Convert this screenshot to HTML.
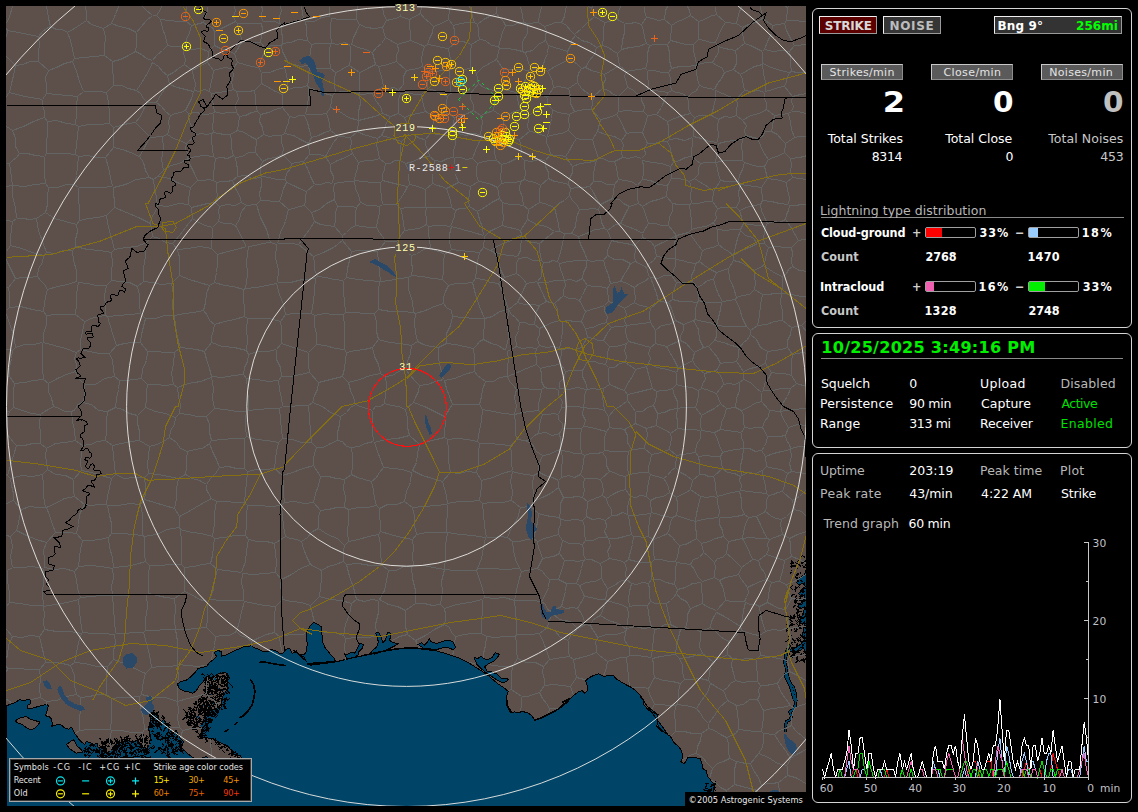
<!DOCTYPE html>
<html><head><meta charset="utf-8"><title>Lightning Tracker</title>
<style>
html,body{margin:0;padding:0;background:#000;}
body{width:1138px;height:812px;position:relative;overflow:hidden;font-family:"DejaVu Sans","Liberation Sans",sans-serif;color:#fff;}
.t{position:absolute;white-space:pre;}
.fr{font-weight:400}.fb{font-weight:700}
.fcb{font-family:"DejaVu Sans Condensed","DejaVu Sans","Liberation Sans",sans-serif;font-weight:700;font-stretch:condensed}
.fc{font-family:"DejaVu Sans Condensed","DejaVu Sans","Liberation Sans",sans-serif;font-weight:400;font-stretch:condensed}
.m{font-family:"Liberation Mono","DejaVu Sans Mono",monospace;background:#5d4f49;line-height:1;padding:0 1px}
.panel{position:absolute;left:812px;width:318px;border:1px solid #d4d4d4;border-radius:6px;}
.btn{position:absolute;border:1px solid;border-color:#f0f0f0 #9a9a9a #9a9a9a #f0f0f0;}
.lbl{position:absolute;background:#5a5a5a;border:1px solid;border-color:#c8c8c8 #8c8c8c #8c8c8c #c8c8c8;}
.rule{position:absolute;height:1px;background:#8a8a8a;}
.bar{position:absolute;width:49px;height:9px;border:1px solid #a0a0a0;border-radius:2px;background:#000;}
.bar i{display:block;height:9px;}
#legend{position:absolute;left:9px;top:758px;width:241px;height:42px;border:1px solid #a8a8a8;background:#000;box-shadow:inset 0 0 0 1px #3c3c3c;}
#copy{position:absolute;left:685px;top:792px;width:122px;height:15px;background:#000;}
</style></head><body>
<svg id="map" width="800" height="800" viewBox="6 6 800 800" shape-rendering="crispEdges" style="position:absolute;left:6px;top:6px;background:#5d4f49">
<g transform="translate(.5 .5)">
<g fill="#004467" stroke="#000" stroke-width="1" stroke-linejoin="round">
<path d="M6 806.5 L6 705.5 L5.9 705.5 L10.5 703.4 L14.8 702 L19 699.1 L23.2 700.5 L27.4 698.7 L30.2 699.8 L29.8 703.4 L26.7 704.8 L27.4 708.3 L32.3 707.6 L39.4 705.5 L45 704.1 L48.5 704.8 L47.1 707.6 L46.4 711.1 L45 715.3 L48.5 716 L50.6 718.1 L52 723 L51.3 725.9 L55.5 724.4 L59.8 723.7 L64 727.3 L68.2 728.7 L71 726.6 L73.1 730.8 L75.9 735 L78 738.5 L80.8 741.3 L84.4 744.1 L85.8 741.3 L90 742 L92.8 744.1 L97 742.7 L97 746.2 L101.2 747.6 L104.7 749.8 L106.2 753.3 L110 750 L114 746 L117 741 L122 743 L126 739 L131 742 L136 740 L140 745 L146 748 L149 744 L150 736 L148 728 L150 720 L149 713 L153 711 L157 716 L160 722 L163 719 L168 726 L172 732 L176 730 L179 737 L183 741 L181 747 L186 752 L192 757 L198 760 L200.3 757.8 L205.6 756 L212.6 761.3 L221.4 763 L235.4 761.3 L241.1 758.1 L239.8 755.1 L233.7 754.2 L231.1 750.7 L227.5 745.4 L223.1 743.7 L217.9 741.1 L212.6 738.4 L207.3 737.5 L202.1 736.7 L201.2 731.4 L202.1 724.4 L202.9 719.1 L205.6 715.6 L209.1 710.3 L214.4 708.5 L220.5 706.8 L221.4 698 L224 692.7 L227.5 687.5 L226.7 682.2 L227.5 675.1 L224.9 671.6 L217.9 673.4 L210.8 677.8 L205.6 676 L204.7 677.8 L202.1 682.2 L198.5 685.7 L195.9 690.1 L192.4 692.7 L188 691.3 L182.7 690.4 L178.3 687.5 L177.1 683.6 L180.1 680.8 L185.4 680.1 L190.6 676 L194.7 672 L197.7 667.8 L202.1 667.2 L206.4 665.5 L209.1 662 L212.6 659.3 L216.1 655.8 L213.5 652.3 L217 649.7 L221.4 651.4 L220.5 655.8 L224.9 654.9 L230.2 652.3 L235.4 649.7 L239.8 647.9 L242.5 646.2 L251.3 645.3 L253 647 L258.3 648.8 L261.8 650.5 L267.1 651.4 L270.6 648.8 L275.9 650.5 L279.4 653.2 L282.9 652.3 L285.5 648.8 L289.1 647.9 L291.7 653.2 L296.1 650.5 L298.7 654.9 L303.1 655.8 L305.7 660.7 L293.5 650.1 L297 652.7 L300.5 654.5 L304.1 653.6 L305.8 651 L306.7 643.9 L305.8 632.5 L307.6 629 L310.2 624.6 L312.8 622 L317.2 623.7 L320.8 626.4 L321.6 635.1 L322.5 642.2 L325.1 648.3 L327.8 651 L330.4 654.5 L333.9 658 L335.3 660.8 L325.1 662.6 L314.6 664 L309.7 664.7 L321.6 663.3 L335.7 661.3 L348 658.3 L360.3 655.7 L372.6 653.1 L384.9 650.4 L395.4 648.7 L406 647.8 L413 647.5 L423.6 648.7 L435.9 650.4 L448.2 654 L458.7 657.5 L467.5 661.9 L474.5 666.3 L481.6 670.7 L486 674.2 L487.6 675 L492.8 679.4 L498.1 683.8 L503.4 687.3 L507.8 690.8 L506 696.1 L507.3 704.9 L511.3 712.3 L513.9 711.4 L517.5 711.9 L522.7 711.1 L528 712.8 L531.5 715.4 L534.1 719.8 L540.3 717.2 L545.6 714.6 L550.8 711.9 L556.1 709.3 L561.4 704.9 L566.7 700.5 L571.9 696.1 L577.2 691.7 L581.6 690 L584.2 692.6 L586.9 690 L586.9 685.6 L585.1 680.3 L587.8 677.7 L593 675 L598.3 673.3 L603.6 675.9 L608.8 674.7 L613.2 675.4 L615.9 678.5 L620.3 681.2 L624.7 683.8 L629.9 686.4 L635.2 690 L639.6 694.4 L643.1 699.6 L645.7 704.9 L651 709.3 L656.3 712.8 L657.2 719 L656.3 726 L660.7 730.4 L666.8 733 L640 696.4 L642.6 699 L643.5 704.3 L647.9 709.5 L653.2 712.2 L657.6 713.9 L656.7 722.7 L659.3 728 L664.6 732.4 L669.9 735.9 L673.4 742.1 L677.8 745.6 L681.3 750.8 L682.2 756.1 L680.4 761.4 L683.9 763.1 L687.5 757 L692.7 757 L699.8 757.9 L701.5 763.1 L701.5 767.5 L705.9 770.2 L706.8 775.4 L710.3 779.8 L713.8 784.2 L712.9 791.3 L713.8 796.5 L715.6 805.7 L715 806.5Z"/>
<path d="M343.6 652.7 L346.2 654.5 L350.6 651.8 L354.1 652.7 L356.8 648.3 L359.4 643.1 L362.9 643.9 L362.1 647.5 L358.5 651 L357.7 654.5 L353.3 657.1 L346.2 658Z"/>
<path d="M370 652.7 L372.6 649.2 L376.1 646.6 L377.9 641.3 L375.2 632.5 L377.9 631.6 L380.5 636 L382.3 642.2 L384.9 639.5 L386.7 632.5 L389.3 631.6 L390.2 636.9 L388.4 639.5 L392.8 642.2 L398.1 643.1 L393.7 645.7 L388.4 648.3 L381.4 651 L374.4 653.6Z"/>
<path d="M417.4 643.9 L420.9 642.2 L423.6 644.8 L427.1 641.3 L428.8 637.8 L430.6 641.3 L435.9 643.1 L441.1 641.3 L447.3 639.5 L452.6 641.3 L455.2 646.6 L452.6 649.2 L446.4 646.6 L441.1 647.5 L435.9 649.2 L428.8 648.3 L422.7 647.5Z"/>
<path d="M473.5 656.6 L477 658.3 L480.5 655.7 L483.2 658.3 L487.6 659.2 L492 656.6 L494.6 652.2 L499 653.9 L496.4 657.5 L492.8 661 L487.6 663.6 L484.1 666.2 L486.7 670.6 L491.1 671.5 L496.4 673.3 L500.8 677.7 L507.8 678.5 L506 681.2 L501.6 682.1 L496.4 679.4 L491.1 675.9 L485.8 672.4 L480.5 668 L476.2 663.6Z"/>
<path d="M115.3 749.1 L119.5 744.8 L123.7 746.2 L127.2 741.3 L130.1 744.1 L132.9 741.3 L135 745.5 L139.2 746.2 L142 749.1 L146.2 750.5 L147.6 753.3 L140.6 755.4 L135 756.1 L126.5 757.5 L119.5 756.8 L116.7 753.3Z"/>
<path d="M807.2 559.7 L804.9 563.6 L806.5 569.6 L803.3 574.5 L799 577.4 L796 582.4 L799 584.3 L802.5 582.4 L804.9 586.3 L801.3 590.2 L798 593.2 L800.9 596.2 L804.5 594.2 L803.3 600.1 L799.4 603.1 L797 606 L800.9 608 L804.1 606 L802.9 612.9 L800 617.8 L798.6 622.8 L802.1 623.7 L804.1 620.8 L803.3 628.7 L802.1 634.6 L804.1 638.5 L800.9 643.4 L796 646.4 L791.1 647.4 L789.1 650.3 L794 652.3 L799 650.3 L803.3 647.4 L804.9 653.3 L807.2 660.2 L808 660 L808 560Z"/>
</g>
<path d="M789.1 644.4 L786.2 650.3 L785.2 656.3 L784.2 662.2 L786.2 668.1 L785.2 676 L788.1 681.9 L791.1 687.8 L793.1 693.7 L794 700 L785.9 670.9 L786.7 677 L789.4 682.3 L792.9 686.7 L794.7 692.8 L795.5 699.9 L794.7 705.1 L792 709.5 L789.4 711.3 L791.1 715.7 L789.4 719.2 L785.9 721 L785 726.2 L785 731.5" fill="none" stroke="#000" stroke-width="3.2"/><path d="M789.1 644.4 L786.2 650.3 L785.2 656.3 L784.2 662.2 L786.2 668.1 L785.2 676 L788.1 681.9 L791.1 687.8 L793.1 693.7 L794 700 L785.9 670.9 L786.7 677 L789.4 682.3 L792.9 686.7 L794.7 692.8 L795.5 699.9 L794.7 705.1 L792 709.5 L789.4 711.3 L791.1 715.7 L789.4 719.2 L785.9 721 L785 726.2 L785 731.5" fill="none" stroke="#004467" stroke-width="1.6"/>
<g fill="#5d4f49" stroke="#000" stroke-width="1">
<path d="M14.8 720.2 L19.7 717.4 L25.3 716 L30.2 718.8 L35.1 720.2 L39.4 721.6 L37.3 725.1 L33.7 728 L30.2 729.4 L26 727.3 L21.1 723.7 L16.9 722.3Z"/>
<path d="M66.1 744.1 L70.3 740.6 L73.1 739.2 L76.6 745.5 L80.8 749.1 L82.2 751.9 L75.9 752.6 L70.3 749.1 L67.5 746.2Z"/>
</g>
<g fill="none" stroke="#000" stroke-width="1.6">
<path d="M306.7 663.6 L314.6 663.3 L325.1 661.9 L335.3 660.6"/>
<path d="M360.3 655.5 L372.6 652.9 L384.9 650.3 L395.4 648.5 L406 647.6 L413 647.3 L423.6 648.5 L435.9 650.3"/>
<path d="M312.8 662.8 L321.6 662.5 L330 661.8"/>
<path d="M258.3 662 L263.6 661.4 L270.6 662.8 L279.4 664.3 L285.5 665"/>
<path d="M249.5 678.7 L253 683.9 L254.4 691 L253.4 698 L251.3 705 L247.8 710.3 L242.5 715.6 L239 717.3"/>
<path d="M233.7 724.4 L237.2 721.7"/>
<path d="M224 731.4 L228.4 728.8"/>
<path d="M534.1 719.8 L540.3 717.6 L547.3 714 L554.4 710.5 L561.4 705.8 L568.4 700"/>
<path d="M506 696.1 L506.6 704.9 L510.4 711.9"/>
<path d="M561.4 702.3 L565.8 699.6 L569.3 697.9"/>
</g>
<path d="M205 705h3v1h-1zM217 681h1v1h-2zM223 704h1v2h-2zM221 689h2v1h-1zM216 707h1v1h-2zM208 726h3v1h-1zM194 724h3v1h-1zM213 677h2v2h-2zM205 711h1v2h-1zM215 687h3v2h-2zM221 691h3v1h-2zM207 709h1v1h-2zM213 701h3v2h-1zM212 702h1v1h-1zM195 715h3v2h-2zM206 718h3v2h-2zM226 685h3v1h-1zM199 724h3v2h-2zM207 688h1v1h-2zM194 712h1v1h-2zM210 693h1v1h-2zM210 684h2v1h-2zM207 701h1v1h-1zM203 714h1v1h-2zM200 704h3v1h-1zM214 701h2v2h-2zM190 720h1v1h-1zM210 713h2v1h-2zM207 719h1v1h-1zM207 709h3v1h-1zM221 695h3v1h-2z" fill="#004467" stroke="none"/><path d="M206 691l-2 -1l-1 0l0 -2M213 687l-1 0M221 698l0 1l1 1M208 690l-1 2M186 717l2 -1M198 725l-2 -1M190 718l0 -2l1 1M197 725l0 0M206 687l-2 -1l2 2l-2 2M200 735l1 -1l-1 2l-1 0M194 721l1 2M212 679l-2 1l2 1l2 -1M219 685l-1 -2M200 719l-2 1l-2 2l1 2M190 719l2 2l0 0M205 736l1 -1l0 0M225 693l2 0M220 682l1 0M221 681l0 2M205 709l1 -2M222 690l0 -1l-2 1M205 702l-2 1M222 694l1 0M210 721l0 0l-1 1M202 717l1 0M200 719l-2 -1l-2 2l0 -1M223 705l1 2l0 1M205 727l2 -2M208 704l0 0l1 1l0 2M205 713l2 -1l-1 0M213 684l2 0M226 691l2 0l-1 -1l-2 -2M222 683l1 0l-1 -2M191 717l-1 0M208 702l-1 0M225 685l-2 1l0 -1M223 688l1 2M201 724l-1 -1l2 1l-1 0M187 722l2 1l0 -1M226 697l-2 2l1 0M207 701l-2 2M225 681l1 -1M226 679l0 -2l2 2l-2 -2M195 704l-2 -1M202 697l1 2l1 -2M199 735l2 0l2 0M210 709l2 2l-1 -2l-1 0M206 736l-1 -2l-1 1l0 0M204 730l-2 1l0 -1l-1 -2M220 698l-1 1l-2 -2M214 685l1 1l-2 2M221 688l0 2l2 -2M209 685l2 -1l-1 0l0 2M196 721l2 2l0 0M213 704l1 1M197 706l0 -2M210 684l-1 2M210 688l-2 1l1 2l-1 2M219 694l0 0l0 0M214 706l-2 0M216 677l-1 0l2 -2l-1 1M190 724l2 2M225 701l-2 1M207 697l-2 1l2 1M224 703l-1 1M223 680l0 -1l-1 1l2 2M227 673l-2 2l0 0l0 0M208 706l-2 -1l-2 1l-1 0M226 684l-2 1l-1 0M205 700l-1 -1M206 682l2 -1M221 699l1 1l-1 -1l2 0M213 685l2 2M216 697l2 -1l2 -1M218 712l0 -1l0 0M216 703l2 0M207 714l-2 2l0 1l2 2M193 708l1 1M222 695l1 -1M226 698l1 2l2 -2M201 699l-1 2l0 2l1 1M194 719l-2 1l-2 0M221 695l-1 1l2 0M206 713l1 -1M203 701l-1 0l2 2l0 2M199 704l0 -1M190 720l0 1M205 702l0 0l1 -2M204 694l-2 0M198 704l1 2l1 0M208 712l-1 -2l2 1l2 2M193 727l-1 0l0 2M220 678l-1 -2M211 681l1 2l-2 0l0 0M213 685l2 2M205 680l2 -1l-1 0M216 702l0 2M213 704l-2 -2l-1 0l-2 -2M226 686l2 1M221 707l0 1l1 2M221 681l2 0l-2 2l1 0M211 693l0 0M205 720l2 -1l-1 0l-2 0M199 728l2 0M207 691l0 1l1 -1M210 722l-2 -1l-2 0M216 711l1 -2l-2 1M207 680l1 -2l1 -2M215 703l0 0l-1 2M218 710l-2 0l-1 0l1 -2M215 713l0 -1M190 711l0 -2M203 692l2 -2l-1 2M219 697l1 1l2 0M205 729l-1 1l-2 -2l1 -2M206 696l2 0M202 699l1 0l0 0l1 -2M212 681l-1 2M198 715l-2 2M209 687l-2 0l-1 -1l0 1M206 727l1 -1l1 2M189 724l2 1M187 713l-1 2l-1 0l2 2M204 725l2 -1l-1 -2M228 682l2 2l2 2l0 1M204 708l-2 1M228 688l-2 -2l2 1M224 698l0 -1M210 700l1 2l-2 -2M189 715l1 -2l-2 -2M191 716l-1 -1l-1 1l0 2M225 679l-1 -2l2 1M207 693l-1 1M216 689l2 1l2 -1M223 698l0 1M204 690l1 1M201 733l1 -1l0 0M187 712l-1 2M211 703l0 -2l2 1l1 1M214 680l0 1M203 702l1 0M212 702l-2 1l0 -2M218 691l2 -2M227 686l-2 -2l-1 0l2 2M219 709l0 -2l0 -2l2 -1M207 693l0 2l1 -1l2 0M210 723l1 -2l1 -2M198 722l1 0M224 676l2 1l0 0M207 688l-2 -2M208 710l2 2l2 -2l-2 -2M208 719l0 2M208 703l-2 -1l0 -2M219 690l0 -1l-2 1l2 -2M190 724l-1 2M206 684l0 1M208 720l1 -2l1 0l-2 0M222 675l2 0M212 711l1 2l2 1M217 687l0 -2M204 732l-1 -1l1 0M199 718l0 2l2 -1l-1 -1M201 721l2 2M191 718l2 -1l-2 2M214 691l2 1l2 2M210 715l-2 -2M212 713l2 -1l-1 -1M208 729l2 -2M207 676l2 0l-2 -2M217 690l-2 2M223 675l2 1M222 704l2 1l1 2l1 2M212 701l2 0l0 2l-2 2M200 734l0 0l2 -1M207 686l-2 -2l2 0M210 689l-1 0l-2 2M228 677l-1 -1l2 -1M220 679l2 0M219 693l0 1M201 705l-2 0M224 682l2 -2l0 1M198 702l0 -2l1 -2M211 720l-2 1l0 -1l-1 2M189 724l-2 -1l1 2l-1 1M198 727l-1 -2M220 698l-1 1l0 -2M201 713l2 -1l2 -2M205 698l1 0l-1 2M202 721l2 2M212 690l1 1l-2 -1M198 712l0 -2M223 693l-2 1M217 679l2 0l-1 1l-1 -2M201 700l-2 1l-1 -1M190 722l0 -2l0 2l-2 0M211 714l2 2l2 -2l1 0M195 731l2 1l2 2l0 1M195 728l-1 -2l-2 0M214 699l0 2M207 714l2 0l-1 2M201 710l1 0l0 -2l0 2M218 674l0 2l2 0l1 1M195 712l0 1l-2 -1M218 700l-1 0M199 712l1 2l1 0M210 706l1 -2M205 706l0 1l0 0l0 1M200 722l-1 -2l2 -1l-2 1M213 678l-1 -2M220 679l2 -2l-1 -1M201 719l-1 1M218 701l1 0l-2 0l2 -2M190 721l1 2l2 0l1 2M202 707l-2 0l2 -2M212 687l2 2M205 679l-1 -1l-1 -1M206 703l-1 -1M204 709l2 1l1 1l-1 -2M224 683l0 -2l2 -1M199 709l0 1l2 -1l0 0M210 686l1 2l2 -1l-2 0M205 724l2 0l0 0l0 -2M207 716l0 -2l2 0M201 735l-1 -2l0 0l2 -1M216 693l-2 -2l2 -1l2 0M200 699l2 0l-1 2l-2 2M204 691l2 2l-1 0l2 2M209 708l2 -1l-2 2l-2 0M217 683l-2 -2M226 680l0 -2l-1 -2M194 711l-2 -1l1 1l0 -1M220 694l-1 2l-1 0M200 727l-2 0M207 678l-1 0l0 2M214 693l1 0l1 0M201 722l2 0l-1 -1l-2 0M205 737l1 1l0 2l1 2M216 680l1 -2l0 -2M195 711l-2 -2l-2 2l-1 -2M189 716l2 2l-2 2l-2 1M204 721l2 -1l-1 2l0 1M205 692l-2 -2l2 -2M206 731l-2 2l-2 0M217 711l-2 0l2 2l1 -2M224 678l0 0l-1 2l-1 -1M199 703l1 1M195 726l-2 1l1 -2M227 684l-2 0l1 -1l0 0M191 714l1 1M200 711l2 -1l2 1l1 -2M201 731l1 -2l0 0M223 686l-2 0l2 -1M195 713l-1 2l-1 0l-2 -1M202 701l-1 -2M199 699l2 -1M214 699l-1 -1l-2 -1M206 728l-2 -2M208 682l-2 -2l-2 0M202 721l0 1M211 713l-1 -1l2 -1M196 730l-1 -2l-2 1l-1 0M216 690l1 2M220 696l-1 1l-2 2M188 716l-2 -2M228 692l2 1l0 0M195 709l1 -1l1 -2l-2 2M196 719l-2 -2l-2 -2l-2 2M220 682l1 -1l1 0M200 737l1 1l1 -1l-2 1M200 706l-2 0M204 718l0 -1l0 -2l-2 0M210 678l2 -1l-1 1l2 1M196 731l2 -1M191 712l-1 -1l-1 1l0 2M184 716l2 -2l-1 1M199 717l1 2M197 703l0 0l-2 1M215 693l-1 -2M212 694l-1 1M202 714l0 1l-2 -2l-2 1M205 715l-1 2M216 692l2 -2M208 723l0 -1l-1 1M208 676l2 -2l1 -1l-1 1M196 703l0 0l-1 -2l2 2M205 676l-2 -2l-2 0l1 -1M198 707l0 2l1 2M204 693l2 0M222 679l2 0l1 1l-1 0M207 676l-2 2M203 697l-2 0l0 -1M203 704l-1 0l-1 2l0 2M216 691l-1 2l-2 0M192 722l-1 1M204 720l1 -1l-1 2M209 684l1 1M206 707l0 -1l1 -2M188 719l1 1M202 733l-2 0M220 694l2 0M194 726l2 0l1 0M223 704l2 1M216 692l1 1l0 2l0 1M203 698l-1 1l1 0M209 686l1 2l0 2l-2 -2M192 719l2 -2l1 -2M203 712l-2 1l2 -2M195 711l1 -2M208 714l0 -1M226 677l-2 0l2 -2l2 0M205 738l1 2M199 710l0 -1l0 -1l0 1M202 710l1 -2M221 680l-1 0M203 707l-2 -1M215 683l-2 0M215 689l-2 -1l-2 -2l2 0M192 722l-2 -2M214 709l1 0M196 718l0 1l0 -2l-1 2M209 688l1 0l-1 -1M215 699l-1 0l2 2M217 700l1 -2M221 675l1 0l-1 2M228 684l-2 1l2 2l-1 2M207 715l1 1M225 701l-2 -2l0 0M196 725l0 1l-2 2M212 685l0 -2M205 706l1 -2l1 -1M218 701l-1 -1M226 693l0 -1l1 1M204 728l1 1l0 1l-2 1M208 687l2 -2l-1 -2l-1 -2M205 693l1 -2l0 1M204 707l-1 2l2 2l2 -2M217 682l1 -1l0 1l-2 0M197 723l-1 2l-1 0l-1 -2M197 722l1 0M195 719l0 0l1 1M217 706l1 1l-1 -2l0 -1M195 708l-1 -2M224 701l1 0l-1 1l1 -2M208 693l-1 2l0 2l-2 0M191 712l0 -1M209 713l1 0l-1 -2M204 730l1 0M194 718l-1 -2M218 674l2 -2M227 682l0 -1M196 702l0 -1l-1 2l0 1M205 712l1 2M186 715l0 1l0 2M224 692l1 0M211 677l-2 0l0 -1l0 -2M189 721l0 1M216 711l-2 -2l1 1M198 707l1 0M205 710l-1 1l0 2M206 712l0 2l2 2l-2 0M216 687l2 2l2 0M220 685l0 -2M209 720l-1 -2l2 2l-2 0M209 713l-2 0M217 687l-1 1l-2 1M216 703l-1 -2M202 738l-1 1l2 -2l1 -1M217 705l-1 -1l2 2l-2 -2M216 687l0 -1l1 -1M210 686l0 1M201 708l2 -1M204 735l0 1l1 -1l-2 2M216 702l1 -1M194 709l-2 0M205 734l-2 2M212 714l2 -1l1 2l2 2M204 713l2 0l-2 1l2 -2M217 706l0 -2l0 -2M196 723l2 -2l1 2M191 716l2 2l0 2l1 2M206 680l-2 2l2 2l-1 -2M191 709l-2 -1M216 683l0 1l-2 2l2 -2M210 715l2 1l-2 -2M217 707l-1 -2M209 690l1 2l0 0M202 695l-2 2M219 685l2 0l1 1M203 704l0 -2M211 704l1 2l2 -1M217 694l-2 2l0 2l-2 -2M225 680l0 2l2 -2l0 -1M193 713l-2 -2l1 -2M217 679l-2 1M201 737l-2 1l-2 -2l1 1M212 678l2 -2l-1 -1l-2 -2M214 709l0 -2l-1 0M211 711l0 -1l2 1M190 723l-2 -2l2 -2l0 -1M228 676l1 2l-1 1M212 679l-1 1l-2 -2l1 -1M188 716l-1 2M184 717l-1 2l-2 0M218 693l1 0M188 715l2 -2l1 0l-1 2M211 710l-2 -1l2 -1l-2 -2M217 706l1 2l1 -1M226 680l1 -1M202 710l-2 -2l0 0M197 721l0 1M210 718l1 2l0 0l-2 0M224 688l1 2M209 693l-1 -2M219 678l-2 2l0 2l1 -2M199 710l-1 2l2 0M201 702l-1 1l2 -2M216 711l1 0l-2 2M220 696l1 1M195 729l-2 0M187 716l0 -1M204 715l2 2l0 1l-2 0M224 694l-1 -2l-1 0l1 0M211 710l2 2l2 2M220 691l-1 2l-1 2M208 708l0 -1l2 1l1 1M201 736l-2 0M206 715l-2 -2M201 736l-2 0l-2 0M223 705l2 -2l-1 -1l-1 0M222 689l0 2M205 678l0 1l-2 1l2 0M206 727l1 2l1 2l0 -1M194 712l0 2M223 679l0 1l0 2M207 728l0 1l-2 0M216 675l2 2M190 709l0 0l0 -1l-2 1M216 700l-1 0l0 0M221 699l2 0l2 1l-1 1M219 702l-1 -2M213 685l1 1l2 2M222 672l1 1l-2 0l1 1M183 718l2 -1l0 -1M191 707l-2 1l-1 -1l2 0M226 675l1 -2M199 699l0 0l0 0l1 0M213 693l0 1l-2 -1M205 730l2 -1l2 -1l-2 0M210 688l-1 2l-2 -1M216 675l0 2l1 1l-1 -1M214 716l1 1l2 -2M209 695l2 -2l1 -2l-2 -1M210 697l-1 0M190 722l0 1l-1 1l0 0M218 700l-2 2M211 711l-1 1M203 707l1 0l-1 2l-1 -1M207 705l1 0M189 710l2 -2M211 721l-2 -2M224 694l-2 2M212 676l0 0l1 -1M204 701l2 0l0 2M207 691l-2 1l-2 2M207 726l-2 -2l0 -2M188 716l2 0l2 -2l-2 -1M210 707l-1 -2l0 -1l-1 -1M221 693l-1 2M187 715l-1 -2l-1 -2l-2 -2M165 735l0 2l-2 1l-2 -2M161 717l2 2l0 -2l-1 -2M165 734l0 1l0 0l0 2M168 741l1 -1l-1 -1l-2 -2M162 749l-2 -1M151 724l-1 2l2 1l-1 -2M160 735l1 -1M153 713l-1 -2l2 -1l1 1M169 742l1 1l0 2l-1 0M167 750l2 2M168 752l0 -2M166 750l-2 -1M175 749l0 -1M164 726l1 -1l1 0M156 714l1 -2l-2 1M168 747l1 -2l0 -1l-1 1M158 736l2 -1l1 -1M165 722l0 2l-2 -1M175 750l-1 1l0 1l2 2M174 745l2 -2M152 717l0 -2M174 751l2 -1l-2 2M173 745l-2 1l0 2l2 2M173 736l0 1l1 -1M161 749l2 0l2 -2M168 727l2 1M160 725l-2 1l-2 2M177 752l-1 -2M153 722l-2 0l2 0l-2 -2M152 715l1 2l-2 1M159 719l1 1l-1 1l0 2M150 714l0 0l-1 1l2 2M165 748l1 -2l-2 2M167 730l2 -2l0 1M162 730l-2 -1l1 0M155 722l2 2l2 -1l-1 1M172 753l1 -1l2 -1l-2 0M154 715l1 1l1 -1M180 740l0 2l-2 1l-1 1M169 727l0 1l-1 2l-1 0M154 719l0 -2M177 742l1 -2l2 1l0 -1M171 744l-1 -1l2 2l2 -1M159 734l0 -1l-1 2M152 720l-1 1M154 734l0 2l2 -1l-1 1M172 733l-1 0l-1 0M173 749l-1 2l2 0M181 740l0 2l-2 -1l2 -1M166 756l1 -1M181 747l-1 2l1 -1l1 1M151 719l0 0l1 -1l1 1M151 717l-2 -1l2 -2l-2 -2M164 750l-1 0l1 -2l2 2M179 749l0 -1M171 732l1 1l-2 1l-1 -2M157 723l-1 2l1 2l2 -2M153 725l-1 1l2 0l0 0M159 735l-1 -1l1 -1l-2 0M172 735l0 -2l-1 -1l-1 -1M181 751l2 2l0 -1M150 716l0 -2l-1 0l-1 -1M175 740l0 0l-1 -1M167 743l0 -2l2 2M150 715l2 -2l0 0l-2 0M153 723l1 0l2 -2M153 728l-2 -2M168 742l0 -2l-1 -2M156 724l1 0l0 2l0 -2M168 731l1 2l0 0M159 726l-1 1M177 750l-2 0l-2 -2M169 736l-1 -1M157 728l0 -1M161 717l2 2l1 -2l-2 0M157 734l-1 2l2 2M161 730l-1 -1M154 721l1 0l1 2l1 1M168 738l0 -1l-2 1l-1 1M168 742l0 2l1 2M152 716l2 2l0 1l-2 -1M181 742l-2 2l2 0M157 717l1 -1l-1 -2l1 1M167 746l0 2l0 1l-1 1M166 732l2 0l-2 1M153 726l0 0M177 739l-2 1l2 -1l2 2M171 735l1 -1l0 2l1 -1M160 751l1 0l-2 -2M176 738l-1 0l1 -2M179 746l0 0l-2 0M162 735l0 2l-1 2l1 0M158 750l1 -2M164 723l2 -1M157 732l-2 2l-2 0l-1 -1M166 740l0 0l2 1M161 753l1 -1l2 -2M156 717l-1 -1M178 742l-2 -2l-2 -1l-2 2M164 729l-1 2l-1 1M181 751l2 -1M165 742l0 -1M166 724l2 -1l-1 2M174 737l-2 -2l-2 1l-2 1M171 744l1 -1l-1 0M156 718l2 -2l-2 -1M169 753l0 0l-1 2M161 753l2 -1l-2 0M169 729l0 -2l-1 2M155 720l-2 0l0 -1l0 -1M156 712l1 1l1 -1l0 -2M172 751l0 -2l2 0M179 750l-1 -2l-1 -1M173 750l2 -2l1 0l-1 1M182 745l-1 -1M158 736l-1 2l0 0l-1 -2M168 748l-1 2l0 1l1 2M180 751l-1 -2l2 1l-2 2M168 755l0 2l2 0M175 733l-2 -2l0 2l2 2M158 734l-1 -1l2 -1l0 -1M152 730l-1 1l2 0M158 721l2 2l-1 2M154 719l1 -1M164 752l2 2M158 751l-1 -1l-2 1l-1 2M181 749l0 -1l-2 -1l2 -2M150 724l0 2l-1 2M173 738l-2 0M155 715l-1 -2l0 1l-2 -1M157 716l-2 2M171 745l1 2M170 737l0 1l-2 -2l-2 2M165 748l-2 2M151 727l0 -1l-1 0l2 -1M165 727l1 -1M152 713l-1 2l1 -1l-2 -2M165 738l-1 -1l-2 0M171 752l2 0l0 1M164 738l-2 0M158 739l1 0l1 1l0 -2M167 751l0 2l1 2l-2 0M170 743l2 1l-1 -1M154 723l2 -2l1 -2l2 0M156 725l-1 -2l0 2l2 1M164 742l1 -1l0 -1l-1 1M161 722l-1 1M172 752l-2 0M151 716l1 1M155 720l0 2l0 -1M179 744l0 2l1 -2M167 735l2 2l-1 -2M178 749l-2 1l-2 2l0 2M175 733l0 -2l-1 1M166 726l0 1l-2 1M161 728l-2 -1l1 0M164 737l1 2l1 -1l2 -2M158 737l-2 -1l0 2M157 720l1 2l0 0l-1 0M160 727l-2 0M169 755l0 1M175 739l0 -2M180 744l1 2M150 723l1 2l1 -1l-2 -1M166 755l1 1l2 -2l-2 2M170 746l2 -1M175 754l2 0M159 724l-2 2M167 726l2 -2l1 2M153 727l-1 -2l2 1M163 745l-2 2M175 733l1 0M176 747l-1 2l0 -1l1 -2M164 747l2 -2M163 744l-1 0l0 -2M177 737l0 -2l-1 -1M158 747l1 1l2 -1M166 733l1 2l1 0l1 0M159 747l-2 2M162 725l-2 -1M158 739l1 1M149 718l2 0M173 750l0 -2l-2 -2M182 750l1 -1l-1 2M156 714l-1 0l1 -1M170 745l2 2l0 -1l-1 2M157 737l1 2M164 727l0 0M163 725l1 -2l0 1M153 718l-1 2l1 1l0 2M171 740l0 2M123 756l1 1l-2 0M113 754l-2 -2l-1 2M118 750l1 1M138 739l-2 -2l-1 -2l1 -1M102 754l-2 1l2 0l-1 2M131 751l0 1l-2 0l0 1M110 741l-1 -2M126 754l1 2l-1 2l0 0M119 755l-1 -1l-2 -2l0 0M116 741l1 -2M134 757l1 -2l-2 -2l-2 2M132 746l1 2l1 1M124 738l0 -1l1 0M147 748l1 1l-2 2M106 757l0 0M142 758l2 -2l2 1l2 2M121 751l0 -1M108 742l-2 0M114 757l2 0M127 755l-2 -2l0 2M103 747l0 1l0 -1l0 1M102 754l-1 0l0 2M104 745l0 2M149 736l0 -2l1 2M112 754l-1 0l2 0M113 756l-2 1l-2 0M150 748l2 -2l1 -1M147 738l-1 -1l-1 0l0 1M123 745l-2 -2M102 741l-1 2l1 1l2 0M101 753l2 -2M118 748l-2 1M113 746l0 -1M137 749l1 2l2 2M107 741l2 -1M103 747l-1 0M112 744l-1 -1l1 -2l-2 -2M142 753l2 -2l1 0l-2 0M102 752l1 -2l2 -1M126 752l-1 2M144 745l-1 2M107 741l-1 -2M105 749l1 0l-1 0M122 740l-2 2l-2 1l0 2M107 756l-2 2M146 757l1 0l2 0M125 747l-1 -2l2 0l1 0M103 752l-2 -1l0 -2M140 746l-2 2l2 2l2 0M126 758l-2 -2l-1 0M102 753l2 0M113 755l-1 -2M102 756l2 -1l1 1l0 -2M121 755l-2 -1M140 748l0 1l1 2l-1 1M133 742l2 2l0 -1l1 2M123 741l-2 -1M109 742l2 1M129 750l1 -1l1 0l1 -1M122 747l-2 0l2 -2l-1 0M112 747l2 2M139 739l2 1l-1 -2M110 745l2 -2l0 -1l-2 -1M137 748l0 0M114 756l1 1l-1 0l0 -1M143 741l2 -1l0 1l1 -1M115 747l0 -2l1 0l0 1M106 752l-1 0l-1 -2M136 738l2 1l2 -2l-2 2M107 752l-1 -1M129 747l-2 0l-2 2M122 750l-1 -2l-2 1M115 752l-2 -1l-2 1l1 2M147 748l0 2l1 1l2 2M116 754l-1 1l0 -1M106 750l0 -1l0 0M137 757l1 -1M124 757l0 0l2 2M118 746l2 -1M106 756l-1 2M109 756l0 2l-1 -1M110 741l-2 -1M133 742l0 0M143 748l0 -1l-2 -2l-1 -2M114 750l-2 -1l2 0M128 756l0 0M142 741l-2 -2l2 1M122 742l-1 1l-1 1l0 -1M130 747l1 1l0 2M144 745l2 -1M119 744l-2 2l-2 1l2 -2M146 741l-1 -2l2 1l0 -1M119 742l-2 0l2 2M120 743l-2 -2M123 757l0 2l1 2M143 753l1 -2l-2 -1M127 755l-2 2M144 741l0 1l2 0l-1 1M143 748l0 -1l-1 -2M130 740l-1 -1l0 2l-1 1M104 757l-2 1l0 -1M146 739l0 -2M101 751l2 0l2 1M144 738l-2 -2l1 -2M150 755l0 2M121 753l-2 -1M142 755l0 1l0 0l-1 2M148 745l-1 1l0 -2M104 744l2 1l-2 2l0 1M141 747l2 -1l1 2M104 743l1 0l2 -1M108 739l2 2M110 744l-2 -2l1 0M130 751l1 1l0 2l0 1M130 738l-1 0l-2 0l-1 2M135 757l2 -2l1 -1M145 749l-1 0M138 742l-1 -2l2 2l-1 2M111 756l-1 2M142 755l-2 0l0 -1M150 740l2 -1M120 742l2 0l1 1l-2 -1M150 747l1 1l2 0l1 -2M118 741l1 -1l0 0l0 0M146 751l0 1M131 742l1 -2l0 0l1 1M116 746l2 1l1 1l2 2M108 751l0 1l2 2M134 747l1 1M116 750l-1 -2l-1 -2M141 740l-2 -1l-1 0M134 742l2 -2M124 740l2 -1M127 744l-2 -2l0 1l2 0M105 742l0 2l-2 -2l2 0M139 741l-1 -1l-1 -1M121 738l1 1l-1 -1l-1 -2M138 752l2 -2M130 747l-1 2M138 748l0 1l2 0M121 738l0 2l-1 0M144 741l-2 -1M124 753l-1 -2l-1 -1l2 0M132 745l-2 1l1 2l-1 -2M112 757l-2 -1l2 2M146 751l-2 2l1 1M125 743l0 -2l2 0M104 747l1 2l-1 -1M124 755l1 0l1 2l-1 1M114 741l0 2M125 739l2 -2l1 -2M142 755l-2 0M142 738l0 1l1 0l1 -1M114 753l-2 -1l-2 1l1 1M105 747l-2 2l1 2l0 1M148 753l0 -2l1 -1M144 739l1 -2l1 -1M121 747l1 -1l0 2M127 741l1 2l-1 -2l-1 0M148 752l-2 1l0 -2M142 738l1 2l-1 -1l1 0M144 738l1 1M119 739l0 2l0 1l-2 1M103 741l2 0l2 0l-2 2M144 750l-1 -2M124 745l-2 2M103 757l1 0l-2 1l-2 -2M102 742l-1 2M123 741l2 -1l-2 -1M128 752l2 0l1 2l0 0M114 752l1 2l0 2M150 743l1 1M105 757l0 -2M132 752l2 -1l0 -2l0 0M101 750l-1 -1l0 -1M138 741l1 1l-2 1M111 751l0 2l-2 1l-1 0M101 740l0 2M146 743l2 -1M125 757l0 0M115 747l-2 1M113 743l2 -1M135 753l0 1l1 -1l-1 -2M142 752l-2 -1l1 1M107 755l1 -2M106 755l1 1M145 741l-1 1M138 737l1 -1l2 -2l0 2M140 757l1 -1l0 2M104 743l1 2l-2 -2M123 744l2 1M139 741l0 2M101 739l-2 -1M140 743l0 0l-2 -1M145 741l1 -2l2 -2l-2 -2M130 746l-1 -2l0 1l-1 1M124 749l0 -1l-2 -2M125 739l0 2M136 745l-1 0M146 750l0 -2M130 753l2 1l-1 1l1 -2M140 750l-1 1l-1 2M120 743l1 -2l2 1l-2 -2M131 758l-1 -1M106 755l-1 1l-2 -2l1 1M102 746l2 2l0 -1l1 -2M142 744l-1 -1l2 -2M143 737l-1 2l2 0l-2 -1M116 743l0 -2l-1 -2l1 -1M108 754l1 2M119 743l-1 -1l-2 1l-1 2M125 737l2 -1M102 745l0 0l-1 1l2 -1M136 750l-2 1M127 749l-2 1l-1 2l-1 -1M141 742l-1 -2l0 -1M132 758l2 -2M107 739l2 -1M132 753l0 0l0 0M115 748l-2 -2l0 0l1 2M136 749l1 0l-1 0l1 1M118 746l1 -1M107 749l-2 -2l-1 -1M114 741l2 0l-1 -1l-1 -2M126 739l-2 0M149 748l-2 2l0 1M110 747l-2 -2l-1 2M120 750l-2 1M115 751l1 -2l-2 1M116 755l2 0l-1 1l-1 2M127 752l-1 1l-1 -2M796 588l-2 1M798 604l-1 -1M801 618l-2 2l2 -2l1 -1M801 623l-2 -2l1 -1l2 2M803 637l-2 -1l-1 -1M791 623l-1 0l0 0M803 595l-2 -1l0 1M797 615l0 -2M797 654l0 2l-1 2l0 1M797 581l1 0M789 640l1 1M796 599l-2 -1l2 2l0 2M797 614l1 1l2 -1M796 657l2 2M793 658l-2 -2l1 -2l-1 0M800 562l1 0M798 661l1 0M795 643l-1 -2l0 -2l0 1M797 639l1 2l0 -2l2 -2M791 642l-1 1M795 617l-1 -2l2 2M796 640l1 -1l1 0l-2 -1M805 589l0 0l-1 -2l-2 2M803 562l-2 1l2 -1l2 -1M800 627l1 1l-2 -1l1 2M798 641l2 -2M799 650l-2 0M793 567l-1 -1l-2 0l2 1M804 641l0 -2l1 -2M794 577l1 -1l1 2l2 -1M791 626l0 0M802 639l2 -2M797 643l-1 2l2 1M795 576l2 -2l-1 2M796 588l-1 1l0 2M793 602l2 0l-1 -2l2 0M800 612l1 -1l-2 0l0 -1M799 628l1 -2M804 651l-2 0M800 584l-2 2l2 2M804 568l-1 -2l2 1l-1 -1M799 603l2 1l1 -1M791 618l-2 1M791 572l-1 0l0 1M801 633l1 -1M795 651l0 2M790 637l-2 2l-2 2l-2 0M795 648l1 -2l-2 2l0 -1M805 583l1 0M801 653l-1 2M797 603l0 0l1 0M800 597l-1 2l2 0l-1 2M801 575l0 2M798 561l0 -2M805 619l1 -1l1 -2l-1 -1M793 645l-2 -2l1 -1l0 0M805 624l0 2l-1 1l0 0M805 658l-1 2l-1 -2M800 660l2 -1l-2 2l1 -1M800 622l0 -2l1 1M803 603l-2 -2l0 -2l2 1M792 564l1 -2M794 653l2 -1l2 0l1 0M798 600l-2 -1l-1 2l0 2M803 614l-1 0l1 -1l1 1M805 557l-2 -1l-1 -1M805 632l-1 1l0 -1l2 -1M790 653l-2 1l2 2l2 0M793 622l-2 -2l1 1M798 563l1 2l2 1M795 659l2 0l0 -2M799 562l-2 -1M800 573l0 -2M804 640l2 1l2 0M798 575l-2 -1M792 628l-1 1l0 1M804 615l-2 -2M804 632l-1 1M802 654l2 -2l1 -1M792 644l-1 1M802 557l-1 -1M804 658l0 2l-2 0M803 661l-1 -1l2 2l-1 0M793 625l0 0M794 619l-2 -2M791 635l-2 0l-2 2M804 571l2 -2l2 -2l-2 2M796 628l2 2M801 590l2 2l-1 -1l-2 -1M796 612l2 0l-2 1M802 643l-1 -2l-1 -1l0 1M795 618l-2 -2l1 -2l-1 2M789 629l-2 -1l2 -2l1 -2M792 638l1 2l1 1l1 -1M799 596l1 1l1 -2l0 -1M790 621l1 0l-1 -2M792 585l-2 2l2 2l-2 -2M805 612l0 2M801 598l0 1M797 619l2 0l-2 -2l0 -2M789 644l-1 1M803 645l0 -2M803 631l1 1M797 661l-2 1M794 632l1 -2l0 0l2 1M800 590l1 -1l2 -2l1 0M806 588l2 0l2 1l2 1M801 644l1 0l0 1l2 -2M796 595l-1 2l0 -2M803 590l-2 0M805 592l-2 -2l-1 2l-2 -2M796 608l1 2l0 2M791 570l-1 1M795 566l-2 -1M797 617l0 0M800 639l-2 -2M797 584l1 0M797 569l-1 -2l-1 -2l0 1M792 647l1 2l0 0M802 600l1 1l2 -1l2 0M795 620l2 2l1 -1M794 565l-1 1l-2 -1M792 625l-1 -2l2 1l-2 1M794 594l-2 0l-1 2l-2 -1M804 617l1 -2l2 -1M802 645l0 1l0 1M797 600l-1 -2l0 1M802 618l2 -1l2 -2M803 608l1 -2M798 609l2 -2l-2 2l0 1M793 654l0 -2l2 -1l-2 -2M794 627l0 2M797 620l0 0l2 2M804 626l1 2l2 -1M791 618l0 0l1 0l-2 -1M796 623l1 1l-1 -1M802 585l2 -2l0 -1l-1 0M805 635l-2 1l-2 0l-1 -2M791 652l1 -2l1 2M800 580l2 1l-1 0M790 615l1 1l-2 1M796 588l-2 2M803 653l0 -1M800 601l-1 -2M795 563l2 0l2 2M797 650l0 -1l0 1l-1 1M806 624l-2 -2M803 609l2 0l0 -2l-1 1M797 564l-2 -2M791 560l1 2l-2 1M799 661l-1 -1l-2 1l-1 0M788 629l-2 2l0 -2l1 -2M791 564l1 1M792 564l-1 -2l2 -1M793 656l1 -2M795 613l2 -2l2 0M789 648l-1 -2l-1 2M803 600l0 0M800 616l-2 1l2 0l-1 -2M802 647l-2 0l-2 2l0 1M795 630l2 -1M797 626l2 -2l1 2l-1 0M794 605l-1 2l2 -2M795 587l0 -1l1 1l1 0M793 647l-2 0l1 2l1 2M799 574l-2 -1l2 1M804 562l1 -2l0 -1M789 622l-2 1l1 -2M712 785l1 -1l1 -1l1 -2M710 792l-1 2M711 789l-1 2M712 787l-1 -1M713 788l2 -1l-2 0l-1 0M710 790l-2 -1M707 788l2 2l2 1M709 786l2 0l0 -2l2 2M708 784l-1 -1l1 0M711 784l2 0M705 783l2 1M712 785l-2 0M714 783l2 2M713 783l0 2l2 -2l1 0M706 792l-1 1l2 2l1 2M708 789l0 1l2 2M714 789l2 2M706 789l-1 -2l1 -2M711 788l-2 2l-2 0M710 791l-2 1M713 786l-1 -2l-2 0M709 791l-2 2l0 -2l-1 0M707 790l1 1l1 1M706 790l-2 0l-1 -1l1 0M714 788l-1 -1M709 791l-1 -1M713 788l0 -1l2 0M231 749l1 1l2 2l2 -1M214 742l2 0l-2 -2l2 1M216 745l2 -2M232 756l-1 -1l2 -1M215 744l2 -2l2 0M239 757l0 2M236 755l1 -2l-2 0M218 750l2 -2l1 0M224 746l1 1l-2 -1l-2 1M220 745l-1 -2l-1 -2l2 2M228 755l1 -2l2 0M226 746l2 -1M222 750l2 2l0 -1M223 748l-2 -2M232 754l1 -1l-2 1M237 759l2 0l-1 -1l1 2M209 743l2 0M237 755l0 1l-2 -2M208 740l-2 1l-2 2M218 744l-1 0M234 757l2 -2l-2 1l-1 1M230 756l0 2M238 757l1 2l1 1l2 2M228 750l-2 0l1 -2M214 745l2 -2l-1 0l0 0M213 740l2 -2l0 1l-2 2M218 746l2 2l-2 -2l-1 1M225 746l-1 -1l2 -1M231 753l-2 0l-2 2M210 740l2 -2l1 0l-1 1M220 746l0 2M230 753l2 -2l1 2M239 757l1 1l-2 0l-1 -2M102 750l1 -1M99 753l0 -2l-2 -1l0 1M98 750l2 -1M103 746l1 2M101 750l2 0l0 -1l-2 2M89 756l-2 2M98 750l-1 -1l-1 -1M97 755l2 2l2 2l-2 -1M96 751l0 -2l2 1M99 755l2 2l1 0M98 752l-1 0l-2 -1l0 1M86 752l0 -2M85 754l0 1l0 1l-1 -2M85 752l-1 -1l-1 -1l-2 2M90 748l-2 -1l-1 2l2 -2M103 750l1 -1M100 749l-2 -2M97 755l1 2M94 751l-2 -1l-2 -1l-1 0M85 752l-1 -2l2 -1l-1 1M103 754l-1 -2l0 -1M94 748l0 2l2 0M103 747l-2 0l-2 -2l-1 1M90 748l2 2l2 -1l2 2M90 752l1 1l2 -2M95 745l0 1l-2 -2l0 2M100 754l2 1M89 745l2 -1l2 2l-2 -2M89 750l-2 1l2 1l0 -2M85 748l1 1l2 1l-1 1M85 751l-2 2l1 -1M107 751l2 0M89 752l-2 2l1 1l2 0M91 745l-2 2l-2 2l1 1M98 747l2 2l-1 -1M86 746l-2 2l-1 1M87 756l-2 -2M101 753l0 -2M84 749l2 0l2 0l0 1" fill="none" stroke="#000" stroke-width="1.3"/>
<path d="M6 658L7 654L8 645L12 636M6 629L12 636M6 606L9 602M9 602L9 592L7 581L7 570M7 570L6 570M807 385L806 386M807 387L806 386M807 332L801 325M807 353L802 352L792 354M801 325L791 327M791 327L790 334L787 340L787 347M792 354L787 347M12 6L9 16L6 23M6 666L7 668M7 668L18 668L28 669L39 669M39 636L30 635L21 637L12 636M39 636L41 645L43 653L45 662M45 662L39 669M6 699L8 700L12 703M6 672L7 668M39 669L40 678L39 687L40 697M30 699L31 699L40 697M382 565L380 555L380 544L378 534M382 565L370 565L358 563L346 564M378 534L368 536L358 539L348 541M346 564L343 561M343 561L343 556L343 551L344 545M344 545L348 541M480 134L473 133L465 135L458 133M480 134L481 128L482 121L480 115M458 133L456 128L453 123L454 117M454 117L461 115L467 113L473 110M480 115L473 110M471 44L470 52L470 60L470 68M471 44L466 42L462 41L456 41M452 68L451 61L449 55L448 48M452 68L458 68L464 69L470 68M456 41L448 48M427 88L427 82L427 77L428 71M427 88L434 90L440 93L447 96M428 71L435 71L442 70L449 70M449 70L449 78L450 85L450 93M450 93L447 96M476 73L470 68M476 73L478 83M470 93L478 83M470 93L464 92L457 91L450 93M452 68L449 70M445 112L446 107L446 101L447 96M445 112L454 117M473 110L473 104L470 99L470 93M801 325L807 319M806 386L796 383M792 354L791 361L791 368L791 375M791 375L796 383M807 407L805 408L792 409L780 411M780 411L782 403L787 396L790 388M796 383L790 388M6 163L9 163M9 163L12 160L16 157L19 153M19 153L15 146L15 138L12 130M6 126L12 130M7 30L18 32L28 34L38 36M7 30L6 37M6 56L7 57L11 61L15 65M15 65L22 64L30 61L38 61M38 36L39 44L38 52L38 61M6 28L7 30M6 94L7 94M7 94L9 92M9 92L11 83L13 75L15 65M104 55L94 56L84 57L74 58M104 55L104 46L105 37L103 28M67 32L70 40L72 49L74 58M67 32L74 28L80 24L86 20M103 28L97 26L91 24L86 20M445 112L434 116M458 133L455 138M434 116L433 122L431 127L430 133M455 138L447 135L439 134L430 133M519 139L514 138L509 136L503 135M519 139L520 144L521 150L520 156M503 135L494 139M496 160L494 153L494 146L494 139M496 160L501 164M501 164L508 162L514 159L520 156M607 230L604 228M607 230L611 240M607 255L607 250L609 245L611 240M607 255L603 260M603 260L597 260L592 261L587 260M587 260L584 252L580 244L578 236M578 236L586 233L595 229L604 228M528 70L520 69L512 69L503 69M528 70L531 68M503 69L496 59M496 59L499 48M522 51L514 49L507 48L499 48M522 51L524 52M531 68L528 63L527 57L524 52M529 131L527 126L528 120L528 115M529 131L535 132L540 134L546 136M528 115L534 111L540 108L547 104M547 136L549 127L551 118L552 109M552 109L547 104M545 160L545 166L548 172L548 178M545 160L538 159L531 161L524 160M524 179L525 173L524 166L524 160M524 179L529 181L535 182L540 185M540 185L548 178M519 139L529 131M546 136L546 143L549 148L550 154M550 154L545 160M520 156L524 160M501 164L501 170L500 176L501 183M501 183L507 182L513 182L520 181M520 181L524 179M791 327L782 320M787 347L781 349L774 350L767 351M750 330L757 325M750 330L750 334M750 334L756 339L760 347L767 351M782 320L774 321L766 324L757 325M688 232L693 238L697 244L702 250M688 232L691 229M691 229L698 227L706 226L713 222M713 222L717 229M702 250L707 248L713 247L718 244M717 229L717 234L717 239L718 244M743 223L750 224L757 225L765 226M743 223L740 229M740 230L745 235L752 237L757 243M765 226L764 232L763 237L764 243M757 243L764 243M717 229L725 230L732 229L740 229M718 244L723 248L728 251L733 255M733 255L735 246L737 238L740 230M733 255L741 250L749 247L757 243M739 210L743 223M739 210L746 207L753 205L760 204M765 226L767 223M760 204L761 210L764 217L767 223M40 697L46 701M46 701L46 704M47 712L47 715M452 404L449 396L446 388L444 380M452 404L461 404L470 404L479 404M444 380L454 378L464 374L474 371M474 371L477 375L481 378L485 381M479 404L481 396L482 389L485 381M663 478L667 475L671 470L675 467M663 478L650 474M669 449L676 455M669 449L663 451L657 453L651 454M650 474L648 472M675 467L676 455M651 454L650 460L648 466L648 472M74 571L76 579L77 588L80 597M74 571L64 568L54 569L44 567M78 599L80 597M78 599L67 602L55 604L43 606M43 605L42 593L43 581L43 568M55 532L46 542M55 532L62 532L68 532L76 533M46 542L43 550L44 558L44 567M76 533L82 540M82 540L80 549L79 557L78 566M78 566L74 571M39 636L44 629M44 629L43 621L44 614L43 606M9 602L20 603L31 605L43 605M7 570L12 567M12 567L22 567L32 566L43 568M16 530L26 535L36 539L46 542M16 530L10 536M10 536L12 546L10 556L12 567M45 662L54 662L62 663L70 665M46 701L56 700L66 696L76 694M76 694L74 685L74 675L70 665M111 533L108 537M111 533L122 533L132 534L142 535M142 535L144 536M144 536L144 545L144 553L145 561M108 537L109 547L112 557L113 567M145 561L135 564L125 566L113 567M108 537L99 539L91 540L82 540M78 566L90 565L101 566L112 568M113 567L112 568M80 597L91 596L101 595L112 595M112 568L113 577L111 586L112 595M179 527L167 529L156 534L144 536M179 527L180 529M145 561L149 565M149 565L159 565L170 564L181 564M180 529L181 541L181 552L181 564M344 545L337 538L327 534L318 528M348 541L347 531L348 520L348 509M344 507L348 509M344 507L336 507L328 509L320 510M318 528L318 522L318 516L320 510M248 539L245 535M248 539L246 550L245 561L241 572M210 563L212 555L213 546L214 538M210 563L217 569M241 572L233 571L225 570L217 569M245 535L234 535L224 537L214 538M180 529L191 532L201 533L212 536M210 563L202 564L193 566L184 567M184 567L181 564M212 536L214 538M274 543L266 541L257 541L248 539M274 543L285 536M285 536L283 526L282 515L281 505M245 535L246 525L246 515L247 505M281 505L270 506L258 505L247 505M378 534L380 531M376 505L367 507L358 507L348 509M376 505L379 508M379 508L379 516L380 523L380 531M74 496L73 490L73 485L73 479M74 496L64 498L55 503L46 507M73 479L65 475L55 474L47 469M45 507L43 496L43 485L42 474M47 469L42 474M55 532L52 524L49 515L46 507M76 533L78 524L79 514L84 504M84 504L74 496M16 530L18 523L19 516L21 509M21 509L29 506L37 507L45 507M541 6L541 7L539 14L538 22M538 22L527 23M520 6L520 7L522 14L523 22M523 22L527 23M479 39L485 40L491 45L498 46M479 39L478 34L478 29L477 24M477 24L483 19L489 16L496 13M498 46L500 39L502 32L505 25M496 13L499 17L503 21L505 25M496 59L489 63L482 67L476 73M471 44L479 39M499 48L498 46M522 51L522 41L527 33L527 23M523 22L517 23L512 25L505 25M496 6L496 13M469 6L471 10L472 16L474 22M452 6L449 8M474 22L467 22L460 23L453 25M449 8L448 19M448 19L453 25M477 24L474 22M456 41L454 36L454 31L453 25M427 44L429 38L432 32L433 26M427 44L434 45L441 47L448 48M433 26L438 24L443 22L448 19M502 116L508 114L514 111L520 109M502 116L493 110M493 110L494 104L495 98L497 91M520 109L518 103L517 98L516 92M516 92L503 89M503 89L497 91M503 135L503 128L503 122L502 116M528 115L520 109M494 139L482 136M482 136L480 134M480 115L493 110M478 83L483 87L490 89L497 91M523 86L516 92M523 86L531 90L539 93L547 97M547 97L547 104M523 86L524 81L527 76L528 70M503 69L502 75L503 82L503 89M427 44L424 46M428 71L422 66M424 46L422 52L421 59L422 66M449 8L447 6M791 375L784 373L778 373L771 372M790 388L781 388L772 390L763 390M763 390L764 383L768 378L771 372M767 351L765 363M771 372L765 363M6 97L7 94M112 186L110 177L108 167L105 157M112 186L101 187L89 187L78 187M78 187L74 184M74 184L76 175L77 166L78 156M105 157L96 157L87 155L78 156M67 32L62 29L56 29L50 26M50 26L48 18L47 10L46 6M86 20L86 13L85 6M50 26L46 28L42 31L38 36M12 130L23 126L33 121L44 117M9 92L20 95L30 97L42 99M42 99L42 105L44 111L44 117M46 153L44 156M46 153L46 143L47 132L47 121M44 156L35 155L27 153L19 153M47 121L44 117M111 23L115 14L118 6M111 23L119 26L128 28L136 32M152 15L146 20L141 26L136 32M152 15L145 9L142 6M103 28L111 23M104 55L112 61M135 51L128 55L120 59L112 61M135 51L136 45L136 39L136 32M427 88L421 94M434 116L425 111M421 94L422 100L423 105L425 111M496 160L490 160L483 161L477 163M482 136L478 143L475 150L472 158M472 158L477 163M411 255L411 262L412 268L411 275M411 255L417 253L423 249L430 247M430 247L434 250L439 251L444 254M444 254L443 262L443 270L442 279M442 279L432 278L422 276L411 275M666 346L670 353L674 360L678 368M666 346L671 344L675 342L680 340M680 340L686 343L690 348L694 352M678 368L682 365L687 363L692 360M692 360L694 352M676 372L667 369L657 367L648 363M676 372L678 368M648 363L650 358L648 353L650 347M650 347L655 343M655 343L666 346M625 362L619 363L614 367L608 367M625 362L626 356L624 350L626 343M626 343L620 345L615 346L609 346M609 346L607 352L607 358L605 364M605 364L608 367M559 231L554 231M559 231L564 233M564 233L562 243L560 252L557 261M541 260L543 262M541 260L540 255L539 249L539 243M539 243L544 239L549 235L554 231M543 262L548 262L552 260L557 261M564 233L571 233M586 260L577 260L568 261L559 263M578 236L571 233M557 261L559 263M498 283L502 291L505 300L508 309M498 283L490 282L483 279L475 278M475 278L472 282M472 282L475 294L479 306L484 318M508 309L499 311L492 316L484 318M444 254L451 249M451 249L460 250L469 251L479 252M479 252L477 261L476 269L475 278M442 279L448 285M448 285L455 283L463 283L472 282M505 350L508 337L507 323L508 309M505 350L498 345L491 343L483 339M483 339L483 332L484 325L484 318M504 277L516 273M504 277L500 269L498 260L494 252M516 273L516 268L516 263L518 258M494 252L502 254L509 255L517 256M517 302L520 296L523 289L526 283M517 302L508 309M526 283L523 279L520 276L516 273M498 283L504 277M490 250L483 247M490 250L494 252M483 247L479 252M541 260L533 260L526 257L518 258M526 283L537 281M537 281L541 276L541 269L543 262M490 250L500 244L511 240L521 234M522 238L521 234M522 238L520 244L520 250L517 256M539 243L533 242L528 241L522 238M671 178L667 185M671 178L677 178L683 179L689 181M689 204L691 203M689 204L684 204L678 204L672 203M672 203L666 196M689 181L691 188L690 195L691 203M667 185L666 196M607 255L614 259L622 259L630 263M603 260L605 267L608 275L610 283M630 263L627 269L623 275L620 281M620 281L610 283M586 260L586 266L583 272L582 278M582 278L587 285M587 285L594 286L600 286L607 288M610 283L607 288M550 154L555 155L560 155L565 156M565 156L572 166M548 178L554 181L561 182L568 184M568 184L569 178L572 172L572 166M520 230L527 219M520 230L514 228L508 227L502 225M502 202L509 204L516 204L523 205M502 202L502 210L503 217L502 225M527 219L528 209M523 205L528 209M554 231L546 226L536 224L527 219M521 234L520 230M483 247L484 236M484 236L489 231L495 228L502 225M559 231L558 223L556 215L554 207M539 202L544 203L549 205L554 207M539 202L528 209M520 181L519 189L522 197L523 205M539 202L539 196L539 191L540 185M524 52L532 50L538 44L545 40M538 22L544 26M544 26L546 31L545 35L545 40M566 6L565 9L564 16L561 22M544 26L550 24L555 22L561 22M617 19L604 22M617 19L618 11L620 6M592 6L591 8M604 22L594 16M594 16L591 8M602 45L608 47L612 50L617 53M602 45L603 37L603 30L604 22M617 53L621 49M624 23L624 32L622 40L621 49M624 23L617 19M588 6L591 8M561 22L566 25L570 30L574 34M574 34L581 28L587 22L594 16M671 178L670 166M667 185L658 184L650 180L642 179M642 179L643 172L643 166L642 160M670 166L661 163L652 162L642 160M598 158L603 158L608 161L614 161M598 158L596 152L594 146L592 139M621 140L614 136L605 134L597 131M621 140L623 145L621 151L622 157M614 161L622 157M592 139L597 131M565 156L569 150L572 144L576 138M598 158L596 160M572 166L580 163L588 162L596 160M592 139L587 139L581 139L576 138M547 136L554 134L561 133L568 130M568 130L576 138M552 109L557 112L563 113L569 114M568 130L569 125L568 120L569 114M547 97L553 87M553 87L558 86L563 87L568 88M568 88L570 95L570 103L574 111M569 114L574 111M736 99L737 104L736 109L736 115M736 99L744 90M766 109L766 103L764 98L764 92M766 109L759 113L750 115L742 120M744 90L751 91L758 90L764 92M736 115L742 120M791 247L792 253L791 260L792 266M791 247L784 247L776 246L768 247M768 247L766 253L765 259L763 265M792 266L788 269L786 273L782 276M763 265L769 269L775 273L782 276M782 320L782 311L780 302L781 293M757 325L759 315L760 304L762 294M762 294L768 294L774 293L781 293M807 271L807 271L799 270L792 266M807 296L801 296L791 294L781 293M782 276L782 282L782 287L781 293M580 474L574 477L568 475L561 477M580 474L582 468L583 461L584 455M561 477L561 468L562 459L561 450M561 450L568 451L574 453L581 453M584 455L581 453M626 325L621 326L616 326L611 327M626 325L624 320L626 314L624 308M624 308L619 305L614 303L608 301M606 322L611 327M606 322L607 316L604 311L604 305M604 305L608 301M628 341L626 336L625 331L626 325M628 341L626 343M609 346L603 340M603 340L605 336L608 331L611 327M603 340L598 340L593 338L587 337M585 328L587 337M585 328L592 327L599 324L606 322M344 479L351 474M344 479L343 488L345 497L344 507M376 505L374 498L373 490L371 481M351 474L357 477L364 479L371 481M584 478L583 484L584 490L582 497M584 478L589 478L595 478L600 479M600 479L602 484L603 490L602 495M602 495L597 497L592 499L587 501M587 501L582 497M563 497L570 497L576 496L582 497M563 497L560 503L560 510L559 517M559 517L560 519M560 519L567 520L575 519L582 520M586 516L582 520M586 516L586 511L587 506L587 501M663 478L666 482L668 487L669 492M669 492L663 496L656 497L650 500M650 474L648 481L647 488L646 496M650 500L646 496M672 517L665 516L658 514L651 512M672 517L670 522L669 528L667 533M667 533L663 535L658 537L653 539M650 513L649 521L648 529L648 536M648 536L653 539M670 624L669 617L667 610L666 603M670 624L664 624L659 628L654 629M647 605L648 612L649 619L651 627M647 605L650 601M666 603L660 603L655 603L650 601M654 629L651 627M111 533L111 523L109 515L107 505M84 504L91 505L98 504L106 504M142 535L142 524L142 514L140 504M107 505L118 505L129 503L140 504M407 634L399 636L392 640L391 640M407 634L405 626L405 618L405 610M383 641L383 641M405 610L397 606L388 604L379 599M378 600L378 612L375 624L376 632M382 565L388 570M346 564L349 576L353 587L356 599M388 570L386 580L384 590L379 599M378 600L371 599L364 601L356 599M351 603L356 599M351 603L349 614L345 624L343 635M376 636L366 637L356 637L345 638M343 635L345 638M75 733L79 730M76 694L80 697M79 730L79 719L80 708L80 697M44 629L56 631L69 631L81 633M70 665L74 662M74 662L76 652L78 642L81 633M78 599L79 610L80 621L82 632M343 561L335 564L328 566L321 570M301 541L307 537L312 531L318 528M301 541L303 548L306 556L310 564M310 564L321 570M351 603L341 600L330 599L319 596M321 570L321 578L320 587L319 596M343 635L334 632L325 632L322 631M314 622L314 622L312 614L310 605M319 596L310 605M282 652L280 645L279 636M279 636L290 634L302 634L305 633M274 632L279 636M274 632L266 634L259 637L251 641M251 641L251 645M345 659L345 656M345 653L344 647L345 638M274 543L275 553L276 562L275 572M242 573L253 574L264 573L275 572M301 541L296 539L290 538L285 536M310 564L300 568L291 574L281 579M275 572L281 579M310 605L301 602L291 601L282 599M281 579L280 585L281 592L282 599M274 632L274 623L274 615L275 606M275 606L282 599M344 479L336 478L328 476L320 476M320 510L313 502M320 476L318 485L315 493L313 502M281 505L284 502M313 502L304 503L294 501L284 502M413 565L411 566M413 565L423 565L433 567L444 569M411 566L412 578L415 590L415 603M444 569L441 581L442 592L440 604M415 603L424 603L432 605L440 604M388 570L396 570L403 566L411 566M380 531L390 534L401 537L412 539M412 539L413 547L412 556L413 565M405 610L415 603M6 474L7 475M6 503L13 500M13 500L13 493L11 485L10 478M7 475L10 478M10 536L6 535M21 509L13 500M42 474L32 476L21 475L10 478M433 26L429 22L424 18L420 13M421 6L420 13M424 46L420 44L415 42L410 40M422 66L417 68L412 69L406 70M406 70L396 61M396 61L396 55L398 50L397 44M410 40L397 44M420 13L409 19M410 40L410 33L409 26L409 19M399 6L400 11L400 16M409 19L400 16M382 6L383 13L386 20M357 6L356 12L356 19M386 20L382 27M382 27L374 28L366 27L359 24M356 19L359 24M400 16L395 18L390 19L386 20M385 37L382 27M385 37L397 44M807 473L805 473L798 472L791 471M807 446L799 446L790 448M790 449L791 456L789 463L791 471M782 491L784 485L785 479L787 473M782 491L792 500M792 500L799 496L804 491L807 489M787 473L791 471M788 427L785 422L782 417L780 411M788 427L785 435M785 435L779 436L773 436L767 436M780 411L769 410M769 410L768 416L764 421L762 427M767 436L762 427M807 424L805 425L797 424L788 427M790 448L789 444L786 440L785 435M761 401L769 410M761 401L761 392M761 392L763 390M761 401L754 403L748 407L741 410M741 410L743 415L743 421L744 427M744 427L750 428L756 427L762 427M750 334L747 339L743 342L739 347M765 363L758 366L750 368L743 371M739 347L738 351L738 356L736 361M736 361L743 371M761 392L755 387L750 382L743 379M743 379L743 371M669 449L670 443L671 438L670 433M651 454L644 448M670 433L666 430L661 428L656 425M644 448L645 441L647 435L646 428M656 425L646 428M714 577L702 581M714 577L714 572L715 567L714 562M702 581L697 576L694 569L690 564M690 564L693 559L699 557L703 552M714 562L711 559L707 555L703 552M672 517L676 515M667 533L672 537L675 541L679 545M696 538L691 541L685 544L679 545M696 538L696 533L695 527L695 521M695 521L688 519L682 517L676 515M669 492L676 497M650 500L651 512M676 515L677 509L677 503L676 497M675 467L680 472L686 475L692 480M692 480L690 489M690 489L686 492L681 494L676 497M741 432L741 437L743 442L743 448M741 432L734 431L727 430L720 429M743 448L736 449L729 450L722 452M722 452L719 445L717 439L714 432M720 429L714 432M722 468L720 456M722 468L713 476M720 456L713 456L706 455L698 456M713 476L708 476L704 474L699 474M699 474L699 468L699 462L698 456M676 455L682 454L689 453L695 452M692 480L699 474M695 452L698 456M743 448L742 457L740 465L741 475M743 448L749 448L755 451L761 450M741 475L748 472L755 473L762 470M761 450L765 456M765 456L766 466M762 470L766 466M722 452L720 456M740 476L734 473L727 472L722 468M741 432L744 427M767 436L766 441L764 446L761 450M790 449L781 451L773 453L765 456M787 473L781 469L773 468L766 466M46 153L56 153L65 153L75 154M44 156L44 165L44 174L45 183M74 184L66 184L57 187L48 187M75 154L78 156M45 183L48 187M73 479L81 470M106 504L107 496L109 487L111 478M81 470L91 472L101 475L111 478M47 469L46 462L45 455L46 448M81 470L80 462L81 453L82 445M82 445L75 440M46 448L55 443L65 442L75 440M113 147L113 141L113 134L113 127M113 147L122 149L130 152L139 156M113 127L120 125L128 123L135 122M135 122L140 127L145 132L150 137M150 137L146 143L143 149L139 156M74 58L72 61M38 61L48 70M72 61L64 63L56 67L48 70M42 99L46 93M48 70L45 77L46 85L46 93M106 92L99 91L91 91L83 91M106 92L108 102L109 112L109 123M109 123L99 124L88 124L78 126M83 91L77 96M77 96L76 105L76 114L75 124M78 126L75 124M113 85L113 77L112 69L112 61M113 85L106 92M72 61L76 71L79 81L83 91M105 157L113 147M75 154L76 144L77 135L78 126M113 127L109 123M46 93L56 94L67 95L77 96M47 121L56 120L66 123L75 124M329 16L329 6M329 16L321 17L314 21L305 21M305 21L303 18M303 18L301 6M280 6L281 10L279 16L279 23M279 23L281 24M281 24L289 24L296 21L303 18M152 62L148 71L142 81L136 90M152 62L158 66L162 71L167 75M167 75L169 84M169 84L164 89L160 95L156 102M136 90L140 93L143 98L147 102M147 102L156 102M135 51L141 54L146 58L152 60M113 85L121 85L128 88L136 90M152 60L157 54L162 50L167 45M167 45L172 46L178 46L183 47M184 64L185 59L183 53L183 47M184 64L178 68L173 72L167 75M193 91L191 98L188 104L185 110M193 91L185 89L177 87L169 84M170 115L175 113L180 112L185 110M170 115L165 111L161 106L156 102M135 122L140 116L143 109L147 102M406 70L403 76L403 84L398 90M421 94L414 94L407 92L400 93M398 90L400 93M385 37L381 43L376 47L372 52M359 24L356 31L353 37L351 44M351 44L358 47L365 49L372 52M451 249L449 242L449 234L451 226M483 235L473 232L462 229L451 226M473 348L476 345L479 341L483 339M473 348L464 346L455 344L446 343M484 318L473 318L463 317L452 316M452 316L450 325L446 333L446 343M448 285L445 291L443 297L443 303M452 316L451 310L446 307L443 303M411 275L408 277M413 312L412 301L408 289L408 277M413 312L415 313M443 303L434 306L425 310L415 313M372 410L372 420L372 431L373 441M372 410L375 406L380 406L384 403M384 403L391 405L398 406L405 409M374 442L385 439L397 438L409 435M409 435L407 427L407 418L405 409M351 447L358 446L365 443L373 441M351 447L352 456L352 465L351 474M371 481L376 477L379 472L383 467M383 467L380 459L377 451L374 442M444 416L434 411L424 406L413 402M444 416L445 423L444 430L444 437M444 437L436 439L427 441L419 444M419 444L409 435M413 402L405 409M314 315L324 313L333 314L343 314M314 315L314 325L316 334L316 344M343 314L344 326L344 337L344 349M316 344L325 345L335 348L344 349M652 388L650 381L648 374L646 366M652 388L644 390L636 392L627 394M627 394L624 390M624 390L627 383L632 376L635 369M635 369L646 366M625 362L635 369M608 367L608 373L608 378L609 384M609 384L614 386L618 388L624 390M648 363L646 366M650 347L643 345L636 343L628 341M655 343L655 330M626 325L634 324L641 323L650 322M655 330L650 322M605 364L599 363L594 361L587 361M587 337L581 347M581 347L584 352L585 357L587 361M539 305L532 304L524 304L517 302M539 305L546 301M546 301L543 295L540 288L537 282M559 263L560 269L562 274L564 280M537 282L546 282L555 280L564 280M582 278L576 281L570 279L564 280M637 185L637 191L637 197L638 203M637 185L631 181L624 180L618 179M612 198L619 199L623 203L629 206M612 198L614 184M629 206L638 203M614 184L618 179M666 196L658 199L650 201L642 206M642 179L637 185M642 206L638 203M614 161L616 167L617 173L618 179M622 157L628 158L635 156L641 158M593 181L593 174L594 167L596 160M593 181L600 181L607 184L614 184M620 223L623 217L626 211L629 206M620 223L627 226L635 229L642 233M642 206L644 211L646 217L648 223M642 233L648 223M672 203L672 210L669 217L668 225M648 223L655 223L661 225L668 225M688 232L676 235M691 229L691 221L690 212L689 204M668 225L676 235M569 195L570 188M569 195L572 200L576 204L579 209M570 188L577 187L583 187L589 186M589 186L593 192L596 198L600 204M579 209L585 209L592 208L598 209M600 204L598 209M554 207L558 203L564 200L569 195M568 184L570 188M571 233L575 226L576 217L579 209M593 181L589 186M612 198L600 204M604 228L601 222L600 215L598 209M607 230L611 227L615 224L620 223M577 82L568 88M577 82L581 88L586 92L593 96M574 111L579 110L585 109L591 109M593 96L591 109M597 131L600 119M591 109L600 119M626 133L621 140M626 133L623 127L620 120L616 114M600 119L605 118L611 116L616 114M531 68L542 68M545 40L548 45M548 45L547 53L544 60L542 68M553 87L552 81L550 76L547 71M542 68L547 71M596 47L594 54L589 60L585 67M596 47L589 42L581 40L575 35M575 35L571 40L570 45L567 51M585 67L581 68M581 68L577 64L573 61L568 59M567 51L568 59M602 45L596 47M617 53L619 65M619 65L614 68L609 71L604 74M604 74L598 72L591 70L585 67M548 45L554 47L561 49L567 51M604 74L605 79L603 83L602 88M577 82L577 77L578 73L581 68M593 96L602 88M547 71L554 66L561 63L568 59M698 21L698 27L698 33L698 39M698 21L704 19L709 16L716 14M716 14L725 22M725 22L721 28L718 35L715 42M715 42L710 42L704 40L698 39M690 15L698 21M690 15L689 10L687 6M715 6L715 9L716 14M649 45L655 44L661 44L667 44M649 45L646 43M646 43L644 37L643 30L641 24M641 24L646 17M646 17L652 18L658 20L664 19M667 44L670 40M670 40L670 35L671 30L671 25M671 25L664 19M619 65L626 71M621 49L629 47L638 46L646 43M626 71L632 70L638 69L645 68M645 68L647 61L647 53L649 45M624 23L629 23L635 22L641 24M644 6L644 11L646 17M695 65L687 66L679 66L671 68M671 68L669 60L669 52L667 44M693 44L693 51L695 58L696 65M693 44L685 44L678 42L670 40M690 15L683 19L677 21L671 25M693 44L698 39M807 21L803 21L794 20L786 20M786 20L787 7M787 7L788 6M714 89L709 88L704 87L699 85M714 89L717 83L721 78L724 72M695 65L696 72L697 79L699 85M696 65L701 63L706 62L712 62M724 72L721 67L716 65L712 62M715 42L718 46M718 46L718 52L715 57L712 62M670 166L673 162M673 162L671 155L670 148L667 141M641 158L645 154L644 148L647 143M667 141L660 141L654 143L647 143M626 133L631 132L636 132L642 132M642 132L647 143M715 90L715 98L713 107L711 115M715 90L722 93L729 96L736 99M736 115L730 117L724 116L718 119M711 115L718 119M807 44L807 45M786 20L784 23M784 23L786 30L790 38L794 45M794 45L807 44M768 247L764 243M733 255L733 260M763 265L754 270M733 260L741 262L747 266L754 270M762 294L754 289M754 270L754 276L755 283L754 289M675 259L682 260L688 262L695 263M702 250L699 261M675 258L675 250L674 243L676 235M695 263L699 261M675 259L675 265L673 270L671 275M676 282L671 275M676 282L681 282L686 282L692 281M695 263L694 269L691 275L692 281M791 247L798 240M767 223L773 221L779 222L785 219M785 219L790 226L794 233L798 240M798 240L803 239L807 239M747 587L748 592L746 597L744 601M747 587L744 583L741 579L738 574M744 601L738 601L732 601L725 600M725 600L724 593L722 586L719 580M738 574L731 576L725 577L719 580M767 602L768 595L769 588L771 582M767 602L759 606M766 579L760 581L753 584L747 587M766 579L771 582M759 606L755 604L750 604L745 602M670 624L680 629M680 629L685 627M676 593L673 597L670 600L666 603M676 593L680 598L686 601L690 608M690 608L687 614L687 620L685 627M701 582L701 589L702 596L702 603M701 582L692 583L685 587L677 589M677 589L676 593M690 608L702 603M714 577L719 580M725 600L716 610M702 603L706 606L711 608L716 610M580 474L584 478M584 455L590 453L596 453L602 452M600 479L609 471M602 452L606 458L606 465L609 471M603 388L609 384M603 388L602 395L603 403L604 410M627 400L621 405L614 409L608 416M627 400L627 394M604 410L608 416M581 453L580 445L580 436L581 428M581 428L575 428L569 428L562 428M560 449L560 444L560 439L559 433M562 428L559 433M444 437L447 439M447 439L448 450L448 461L450 472M419 444L417 453L416 462L412 470M450 472L442 481M442 481L432 478L422 475L412 470M379 508L387 504L396 504L404 501M383 467L393 468L402 469L411 472M404 501L406 491L410 482L411 472M602 495L606 498M609 471L614 472L619 475L625 476M625 476L625 489M625 489L618 491L612 494L606 498M648 472L641 472L635 473L628 474M646 496L640 495L635 497L630 496M625 476L628 474M625 489L630 496M607 588L601 578M607 588L614 585L619 581L626 579M601 578L601 573L601 568L600 563M609 558L600 563M609 558L614 559L619 560L624 562M626 579L625 573L626 568L624 562M629 606L635 605L641 605L647 605M629 606L628 598L629 591L631 583M650 601L649 595L649 589L648 583M631 583L636 584L642 582L648 583M807 805L801 807L798 807M407 634L415 640M415 640L417 644M418 645L419 646L418 648M80 697L89 696L97 694L106 694M74 662L85 663L96 666L107 666M107 666L106 676L106 685L106 694M79 730L89 729L99 729L110 729M110 729L111 719L111 709L111 698M111 698L106 694M560 519L560 524L558 529L558 534M582 520L584 526L584 533L585 540M582 544L585 540M582 544L576 543L569 543L562 540M562 540L558 534M538 513L537 522L535 530L533 538M538 513L545 515L551 516L559 517M558 534L551 536L544 538L537 541M533 538L537 541M605 599L598 599L591 597L584 596M605 599L607 588M601 578L594 581L586 582L579 585M579 585L584 596M480 669L480 668M468 662L470 662L476 664M251 641L246 637L240 635L236 631M275 606L264 605L254 603L244 601M236 631L239 621L241 611L244 601M242 573L241 582L243 591L243 600M244 601L243 600M217 569L214 579L213 589L209 599M243 600L232 600L221 600L209 599M212 536L214 524L214 513L216 501M247 505L244 502M244 502L235 502L225 501L216 501M792 500L794 509M794 509L801 511L806 516L807 517M784 560L791 556M784 560L783 567L781 574L779 581M791 556L799 559L806 563L807 563M779 581L786 584M786 584L796 580L805 574L807 573M758 560L766 554M758 560L760 567L764 572L766 579M771 582L779 581M766 554L772 556L778 558L784 560M789 538L790 544L790 550L791 556M789 538L797 534L806 531L807 531M785 609L791 598M785 609L778 608L773 605L767 602M791 598L789 594L788 589L786 584M791 598L799 599L806 598L807 598M739 347L731 345L723 342L714 340M720 363L725 362L731 362L736 361M720 363L717 357L713 352L708 346M708 346L714 340M750 330L746 326M746 326L736 326L727 326L716 325M714 340L716 336L716 331L716 325M741 410L735 407M743 379L739 382M739 382L739 390L736 398L735 407M720 429L721 422L724 415L726 408M735 407L726 408M676 372L676 384M676 384L672 388M652 388L656 391M672 388L666 390L661 390L656 391M627 400L635 411M635 411L642 411L647 407L653 405M656 391L656 396L655 400L653 405M656 425L657 413M646 428L635 423M635 411L635 423M653 405L657 413M700 430L693 429L685 429L677 428M701 430L700 425L700 420L701 415M677 428L677 421L676 415L677 408M695 407L689 407L683 407L677 408M695 407L701 415M695 452L696 444L700 438L700 430M714 432L701 430M670 433L677 428M720 403L726 408M720 403L714 408L708 411L701 415M657 413L664 412L670 409L677 408M698 390L698 395L697 401L695 407M698 390L691 387L683 386L676 384M672 388L674 395L677 401L677 408M695 521L696 513L698 505L700 496M695 521L702 519L710 518L718 517M718 517L719 510L717 503L717 497M700 496L706 497L711 496L717 497M690 489L700 496M696 538L701 543M701 543L708 541L715 538L723 536M723 536L722 530L719 524L719 517M713 476L715 483L715 489L717 496M9 163L10 170L11 177L12 185M45 183L34 184L24 186L12 185M12 185L6 186M139 156L143 162L145 170L149 177M113 187L125 184L136 179L149 177M144 499L140 504M144 499L145 492L145 485L144 477M111 478L115 474M115 474L124 478L134 477L144 477M6 287L8 287M6 310L9 307M9 307L9 300L9 294L8 287M6 259L7 262L11 270L15 278M15 278L8 287M331 18L339 19L347 19L356 19M186 21L177 21L169 20L160 19M186 21L185 14L186 7L186 6M161 6L160 9L156 15M156 15L160 19M191 25L189 32L186 39L184 47M191 25L186 21M167 45L165 36L162 28L160 19M152 15L156 15M279 23L274 21L268 21L262 21M261 6L262 8L261 15L262 21M207 6L207 10L205 16L203 22M203 22L207 25L212 27L214 31M214 31L221 28L227 25L235 21M234 6L235 10L233 16L235 21M191 25L203 22M193 91L194 90M184 64L192 70M192 70L193 77L195 83L194 90M234 53L227 50L220 48L214 45M234 53L237 62M213 70L207 62M213 70L220 68L226 67L232 69M207 62L208 51M214 45L208 51M237 62L232 69M192 70L197 67L202 64L207 62M209 91L204 89L199 91L194 90M209 91L210 84L212 77L213 70M184 47L192 49L200 48L208 51M214 31L214 45M276 349L267 351L257 351L248 354M276 349L276 359L280 367L281 376M278 380L281 376M278 380L268 381L257 379L246 378M248 354L247 361L244 367L243 374M246 378L243 374M281 343L276 349M281 343L290 346L299 349L308 352M309 372L308 365L308 359L308 352M309 372L300 374L291 376L281 376M425 111L418 113L411 114L404 117M400 93L398 99L398 106L398 113M404 117L398 113M430 133L425 139M425 139L419 138L415 135L409 133M404 117L406 122L407 128L409 133M502 202L499 198M483 235L482 227L479 219L477 211M477 211L484 207L491 202L499 198M501 183L497 187M477 163L476 169L476 175L478 181M478 181L484 182L491 184L497 187M499 198L497 187M430 247L429 240L428 233L428 226M450 226L443 225L436 225L428 226M315 278L302 279L290 282L277 282M315 278L314 290L313 301L311 313M311 313L303 313L294 313L285 314M285 314L283 304L279 294L276 283M317 276L315 278M317 276L325 277L334 279L343 280M314 315L311 313M343 314L345 312M345 312L344 301L343 291L343 280M281 343L281 335L281 328L280 321M280 321L285 314M308 352L316 344M380 373L378 364L374 356L372 347M380 373L370 375L359 379L348 382M372 347L364 349L355 350L346 352M346 352L345 360L344 368L342 376M348 382L342 376M355 404L360 406L366 408L372 410M355 404L353 397L350 390L348 382M384 403L385 394L386 385L385 376M385 376L380 373M378 339L372 347M378 339L376 331L376 322L374 313M344 349L346 352M345 312L355 312L364 313L374 313M318 382L309 372M318 382L326 380L334 378L342 376M417 341L423 344L430 346L438 347M417 341L411 345M411 345L410 353L407 361L405 369M438 347L438 358L440 368L443 379M405 369L410 375L414 380L419 385M443 379L435 381L427 384L419 385M415 313L414 323L415 332L417 341M446 343L438 347M413 312L402 311L390 311L378 309M378 339L389 342L400 343L411 345M374 313L378 309M385 376L392 375L398 371L405 369M474 371L474 363L474 356L473 348M413 402L415 397L418 391L419 385M452 404L449 408L447 412L444 416M650 308L658 301M650 308L645 306L639 305L634 302M658 301L656 293L653 285L650 277M634 302L635 297L634 292L634 287M634 287L639 283L644 281L649 277M624 308L634 302M650 322L649 317L649 313L650 308M620 281L625 282L630 285L634 287M607 288L608 301M672 299L668 302M672 299L680 301L688 301L697 302M668 302L671 308L673 314L675 320M697 302L695 308L695 313L695 319M683 324L693 320M683 324L675 320M693 320L695 319M676 282L674 288L672 293L672 299M671 275L664 275L657 278L650 277M658 301L668 302M698 300L697 287M698 300L697 302M692 281L697 287M655 330L661 325L669 324L675 320M721 302L713 302L706 302L698 300M721 302L720 309L718 317L716 325M716 325L709 322L702 321L695 319M680 340L680 335L683 330L683 324M694 352L703 347M703 347L699 339L698 329L693 320M703 347L708 346M603 388L598 389L592 388L587 389M587 361L582 370M582 370L582 376L585 382L587 389M554 303L563 295M554 303L557 308L557 314L559 320M563 295L568 298L574 298L579 300M559 320L562 321M562 321L568 320L574 321L581 321M579 300L585 311M585 311L581 321M546 301L554 303M564 280L565 285L563 290L563 295M587 285L584 290L582 295L579 300M585 328L581 321M581 347L575 349L568 348L561 349M561 349L559 348M559 348L561 339L562 330L562 321M604 305L598 307L591 309L585 311M634 245L635 250L634 255L635 261M634 245L642 237M642 237L646 239L651 242L654 246M654 246L656 256M656 256L653 260L649 263L646 267M646 267L635 261M611 240L619 242L626 243L634 245M630 263L635 261M642 233L642 237M676 235L669 239L662 242L654 246M675 258L669 258L662 257L656 256M649 277L646 267M618 96L618 101L618 106L618 111M618 96L627 87M627 87L632 89L636 93L641 95M618 111L627 110L635 111L643 111M643 111L644 106L641 100L641 95M602 88L608 90L613 94L618 96M616 114L618 111M626 71L624 76L626 82L627 87M647 115L646 120L644 126L642 132M647 115L643 111M645 68L647 70M641 95L647 89M647 70L647 76L648 83L647 89M671 68L668 72M647 70L654 70L661 72L668 72M664 19L665 10L667 6M736 23L738 14L741 6M736 23L742 27M742 27L748 24L755 22L762 18M762 18L761 12L760 6M787 7L785 6M762 18L772 25M784 23L772 25M736 23L725 22M766 109L774 115M742 120L746 125L744 130L745 135M745 135L757 138M774 115L773 120L772 126L771 131M757 138L762 136L765 131L771 131M774 115L788 113M771 131L777 134L781 139L785 143M785 143L794 137M794 137L791 129L790 121L788 113M784 86L778 87L772 89L765 91M784 86L792 96M792 96L791 101L793 106L791 111M788 113L791 111M744 90L743 85L742 79L740 74M765 91L765 82L763 73L762 64M762 64L754 66L747 70L740 74M724 72L733 69M740 74L733 69M718 46L724 48L730 49L735 50M733 69L736 63L736 57L735 50M742 27L742 33L743 38L744 43M744 43L735 50M789 51L781 50L773 51L764 49M789 51L790 57L790 64L791 71M789 72L780 70L771 67L762 63M789 72L791 71M762 63L762 51M764 49L762 51M772 25L771 33L767 41L764 49M794 45L789 51M807 72L804 72L797 72L791 71M784 86L786 81L787 77L789 72M807 93L800 94L792 96M744 43L750 45L756 48L762 51M745 135L742 139M718 119L717 126L718 134L717 142M742 139L734 140L726 141L718 143M673 162L679 160L685 157L691 156M667 141L669 139M691 156L691 150L692 144L692 137M669 139L676 138L684 140L692 137M711 115L705 115L699 115L694 117M717 142L709 141L701 138L693 136M693 136L693 130L692 123L694 117M789 205L795 205L801 204L807 204M789 205L788 210L786 214L785 219M791 111L798 111L805 113L807 113M807 136L803 136L799 136L794 137M728 268L729 278L733 287L736 297M728 268L716 272M716 272L713 279M713 279L715 286L718 294L722 301M722 301L735 299M735 299L736 297M733 260L728 268M754 289L749 294L742 295L736 297M699 261L704 265L710 269L716 272M697 287L702 284L707 280L713 279M746 326L742 318L739 308L735 299M757 138L760 145L763 152L768 159M785 143L784 152M768 159L773 157L779 155L784 152M708 723L708 728M708 723L714 715L719 707L727 700M708 728L714 730L720 734L726 737M738 729L735 733L731 735L726 737M738 729L738 721L737 713L736 705M736 705L727 700M710 683L707 692L701 700L696 708M710 683L714 685L718 688L723 690M696 708L700 713L703 718L708 723M723 690L727 700M732 658L740 659L748 658L756 659M732 658L731 665L733 673L735 680M756 659L756 666L757 674L757 681M735 680L742 682L749 681L757 681M604 450L612 451L620 451L628 451M604 450L604 443L604 437L606 431M624 429L627 435L627 442L631 449M624 429L619 428L614 428L609 427M631 449L628 451M609 427L606 431M602 452L604 450M628 474L627 466L627 459L628 451M581 428L583 426M583 426L591 427L598 429L606 431M644 448L631 449M635 423L624 429M608 416L609 427M604 410L597 408L590 408L583 407M583 407L582 414L585 420L583 426M536 348L529 347L522 348L516 346M536 348L539 345M539 345L537 339L539 334L539 328M516 346L515 337L518 330L519 322M519 322L524 322L529 324L534 324M534 324L539 328M559 348L553 346L546 347L539 345M559 320L552 322L545 325L539 328M508 309L511 314L515 317L519 322M507 351L516 346M539 305L536 311L535 318L534 324M560 449L554 451L549 454L542 455M559 433L552 435L545 432L538 433M538 433L534 435L530 439L525 440M542 455L536 451L532 444L525 440M446 532L446 523L447 513L447 504M446 532L436 532L426 532L416 534M447 504L435 505L424 506L412 507M416 534L414 525L414 516L412 507M442 481L444 488L446 495L447 503M404 501L412 507M412 539L416 534M628 515L629 522L630 528L631 534M627 514L622 512L616 515L611 515M631 534L624 536L616 538L608 538M608 538L607 537M607 537L604 531L606 526L605 520M605 520L611 515M650 513L643 514L635 515L628 515M630 496L628 502L627 508L627 514M633 536L638 536L643 537L648 536M633 536L631 534M606 498L607 503L611 509L611 515M633 536L632 544L630 551L628 559M609 558L607 551L610 545L608 538M624 562L628 559M600 563L595 561L591 559L585 559M585 559L583 554L583 549L582 544M585 540L592 540L599 537L607 537M586 516L592 519L599 518L605 520M651 579L651 574L651 568L651 562M651 579L659 579L666 582L674 584M674 584L675 577L675 569L676 562M654 559L651 562M654 559L661 559L668 561L675 561M626 579L631 583M628 559L636 561L643 562L651 562M648 583L651 579M677 589L674 584M690 564L676 562M653 539L653 546L653 552L654 559M679 545L678 551L677 556L675 561M703 552L701 543M680 629L678 637L676 645L675 654M654 629L653 638L652 647L651 657M675 654L667 655L660 656L652 658M684 679L682 672L682 665L679 658M684 679L692 679L700 678L708 680M679 658L687 657L695 655L702 653M708 680L709 673L710 667L712 661M712 661L702 653M675 654L679 658M680 683L672 681L663 680L654 677M680 683L684 679M654 677L653 671L653 664L652 658M710 683L708 680M696 708L690 706L684 705L677 704M677 704L678 697L678 690L680 683M685 627L690 629L695 629L700 631M700 631L700 638L699 646L702 653M723 690L727 687L730 683L735 680M732 658L727 654M727 654L722 657L717 659L712 661M677 704L675 705M708 728L701 733M675 705L674 714L675 722L675 731M701 733L692 733L684 731L675 731M701 733L700 740L697 746L696 753M670 736L675 731M696 753L691 754L688 756M687 757L687 757L682 759M184 567L184 575L184 583L184 591M209 599L207 601M184 591L191 594L199 599L207 601M82 632L93 633L103 633L114 634M107 666L113 659M114 634L115 642L113 650L113 659M142 732L143 741L143 746M142 732L131 732L121 730L111 730M111 730L109 740L111 749M562 540L559 553M537 541L538 547L540 552L542 558M542 558L547 557L553 556L559 553M482 599L469 602L456 604L444 608M482 599L482 610L481 621L481 633M481 633L472 633L464 634L455 636M455 636L451 632L449 627L444 624M444 624L445 619L445 614L444 608M486 636L485 645L483 653L483 657M486 636L481 633M452 655L453 651L453 650M454 643L455 636M415 640L425 635L434 629L444 624M440 604L444 608M508 690L511 689M520 711L521 705L521 696M521 696L511 689M489 664L492 665L502 666L512 666M511 689L511 681L511 674L512 666M549 708L557 708M549 708L546 703L542 698L539 692M539 692L544 685M544 685L553 684L561 685L570 686M570 686L572 692L573 695M548 713L549 708M521 696L527 696L533 694L539 692M585 679L584 679L576 677M576 677L570 686M320 476L313 465M284 502L283 493L283 484L282 475M282 475L292 472L303 468L313 465M211 498L208 493L206 489L206 484M211 498L200 504L190 510L179 516M206 484L199 480L192 478L185 474M174 508L179 516M174 508L176 498L176 488L178 478M178 478L185 474M179 527L179 516M216 501L211 498M187 451L186 459L186 467L185 474M187 451L194 449L202 448L209 443M209 443L212 451L216 459L219 467M219 467L215 473L210 478L206 484M144 499L154 502L164 505L174 508M148 473L144 477M148 473L158 474L168 476L178 478M716 393L723 384M716 393L711 391L706 389L701 388M723 384L722 379L719 374L716 370M701 388L702 383L705 379L704 373M704 373L716 370M739 382L734 384L729 383L723 384M720 403L716 393M698 390L701 388M720 363L716 370M692 360L695 365L699 369L704 373M726 553L728 541M726 553L731 557L736 562L741 567M728 541L742 538M742 538L746 545L749 552L752 559M741 567L752 559M714 562L717 558L722 557L726 553M723 536L728 541M738 574L741 567M758 560L752 559M48 187L47 196L47 204L45 212M12 185L12 196L15 207L16 218M45 212L36 218M36 218L29 219L23 218L16 218M6 220L12 221M12 221L16 218M6 251L10 245M12 221L11 229L10 237L10 245M40 414L31 413L22 410L13 407M40 414L39 424L40 433L40 443M40 443L32 443L24 445L16 445M9 411L7 418L7 426L7 434M9 411L13 407M7 434L10 438L13 442L16 445M7 475L10 465L13 455L16 445M46 448L40 443M6 411L9 411M6 434L7 434M152 236L150 223M152 236L146 242M150 223L138 217L126 212L114 207M114 207L106 215M146 242L136 246L125 247L114 249M114 249L111 238L108 227L106 215M78 187L78 198L79 209L79 220M113 187L113 194L114 200L114 207M106 215L97 217L88 218L79 220M45 212L54 218L65 221L76 224M79 220L76 224M75 440L74 430L72 421L71 411M40 414L44 411L48 409L53 406M71 411L64 411L59 408L53 406M6 349L12 350M6 314L9 323L13 334L15 347M12 350L15 347M6 376L9 376M12 350L11 358L9 367L9 376M13 407L13 399L13 391L14 383M9 376L14 383M187 451L180 448L176 442L169 437M148 473L147 464L148 455L149 446M149 446L156 444L163 441L169 437M209 443L211 440M211 440L209 432L209 424L206 416M179 413L188 414L197 416L206 416M179 413L175 417M169 437L170 430L174 424L175 417M115 474L114 465L113 455L112 445M149 446L139 440M139 440L130 441L121 443L112 445M82 445L90 444L97 441L105 440M105 440L112 445M175 417L165 413L155 411L145 407M139 440L139 431L137 423L137 415M145 407L137 415M242 41L240 35L238 29L237 23M242 41L248 41L254 42L260 42M237 23L245 23L253 23L261 23M260 42L261 36L262 29L261 23M235 21L237 23M234 53L237 49L239 45L242 41M150 223L151 217L155 211L157 205M149 177L153 179M157 205L156 197L154 188L153 179M157 205L167 206L178 203L188 204M153 179L157 176M157 176L169 178L179 183L190 187M190 187L189 193L188 198L188 204M152 236L159 238L165 242L172 243M172 243L179 235L185 227L192 218M192 218L191 207M191 207L188 204M248 410L248 399L247 389L246 378M246 411L236 411L225 409L214 408M214 408L212 398L213 388L211 377M243 374L233 375L222 377L211 376M179 413L180 404L178 396L177 387M206 416L214 408M211 377L200 381L188 383L177 387M147 384L146 392L146 399L145 407M147 384L156 384L164 385L173 384M173 384L177 387M211 342L211 336L213 330L214 324M211 342L222 346L234 347L246 350M214 324L224 321L234 319L244 316M246 350L247 340L246 329L247 318M247 318L244 316M248 354L246 350M204 351L206 359L209 368L211 376M204 351L211 342M280 321L269 318L258 318L247 318M172 243L177 249M146 242L145 255L143 268L143 281M177 249L179 257L179 266L179 275M143 281L152 282L161 284L171 283M179 275L171 283M214 324L209 320L207 315L203 310M244 316L244 307L243 299L243 289M203 310L205 302L206 293L209 285M209 285L214 282M214 282L224 285L233 286L243 289M276 283L266 285L256 287L245 288M245 288L243 289M411 255L405 251L400 247L396 241M396 241L404 230M428 226L426 224M404 230L411 229L419 228L426 224M331 18L330 26L330 34L331 43M350 45L344 42L337 44L331 43M349 65L344 67L340 70L335 72M349 65L350 58L350 52L350 45M330 43L329 51L329 59L330 68M330 68L335 72M477 211L469 206M478 181L470 186M469 206L468 200L469 193L470 186M450 226L452 221L454 216L455 210M469 206L464 208L459 208L455 210M426 207L425 213L426 218L426 224M426 207L434 207L442 207L451 207M455 210L451 207M434 160L434 168L432 175L432 183M434 160L441 161L447 158L453 157M454 157L454 166L455 174L458 182M432 183L437 185L441 186L446 188M458 182L446 188M455 138L455 144L453 150L453 157M425 139L425 145L428 150L429 156M429 156L434 160M472 158L466 159L460 157L454 157M470 186L458 182M451 207L450 200L448 194L446 188M378 309L378 300L378 291L379 281M343 280L346 277M346 277L357 279L368 280L379 281M408 277L399 278L389 280L380 281M583 407L584 401L584 395L586 389M561 349L560 363M582 370L576 370L570 370L565 371M560 363L565 371M586 389L577 387L568 389L559 388M565 371L564 377L559 382L559 388M713 222L716 218L715 213L717 208M739 210L736 207M736 207L730 207L723 207L717 208M691 203L698 203L705 201L712 201M717 208L712 201M742 139L741 146L742 153L742 160M718 143L717 149L716 155L715 162M715 162L724 160L733 160L742 160M656 114L667 121M656 114L661 107L664 99L668 92M667 121L674 118L682 115L690 113M668 92L671 90M671 90L676 92L682 93L687 97M687 97L688 102L688 108L690 113M647 115L656 114M669 139L668 133L668 127L667 121M647 89L654 90L661 91L668 92M694 117L690 113M668 72L670 78L670 84L671 90M699 85L696 90L691 93L687 97M807 179L806 179L799 178L792 177M792 177L790 171L791 165L790 158M790 158L799 157L807 155M790 158L784 152M768 159L764 166M742 160L744 162M764 166L757 166L750 164L744 162M788 204L789 197L787 190L786 182M788 204L779 203L771 201L762 200M786 182L780 180L774 179L767 178M762 200L761 187M761 187L767 178M792 177L786 182M760 204L762 200M764 166L767 178M736 207L739 200L738 192L740 184M740 184L747 185L754 186L761 187M744 162L742 169L739 175L738 181M740 184L738 181M716 612L713 617L711 621L710 627M716 612L724 616L732 621L740 626M710 627L716 632L721 637L728 641M728 641L733 638L737 634L741 630M740 626L741 630M700 631L710 627M745 602L743 610L742 618L740 626M727 654L728 641M561 477L558 480M542 455L540 460L538 466L539 472M539 472L545 475L552 477L558 480M563 497L558 487M558 487L558 480M516 439L510 445M516 439L515 431L515 422L514 414M510 445L499 444L489 443L479 443M514 414L503 413L493 411L482 409M482 409L481 420L479 430L477 441M477 441L479 443M479 404L482 409M447 439L457 438L467 439L477 441M450 472L458 473L467 471L476 472M476 472L478 463L478 453L479 443M626 628L627 621L628 614L627 607M626 629L618 623L608 620L600 615M627 607L620 604L613 602L606 600M606 600L604 605L602 610L600 615M651 627L643 628L635 626L626 628M625 631L626 629M625 631L624 640L629 647L629 655M629 655L636 655L644 656L651 657M625 631L616 634L606 634L597 637M590 625L592 629L595 633L597 637M590 625L592 620L596 617L600 615M596 652L596 647L595 642L597 637M596 652L599 655L603 658L607 661M629 655L626 657M626 657L620 657L614 659L607 661M576 677L575 671L574 665L573 659M596 652L588 655L581 657L573 659M603 675L604 673L606 667L607 661M648 688L642 687L636 687L631 687M648 688L649 694L652 699L654 704M654 704L651 709M654 677L648 688M626 657L627 667L628 676L629 686M675 705L668 705L661 704L654 704M738 729L746 730L754 731L761 731M726 737L728 743L728 751L729 758M750 763L745 763L741 762L736 761M750 763L758 753M758 753L762 747L763 740L763 733M761 731L763 733M729 758L736 761M696 753L702 757L707 763L712 768M729 758L723 761L717 763L712 768M712 768L709 778M755 801L757 790M755 801L747 803L743 807M757 790L749 788L742 786L734 784M729 807L729 804L726 798L726 790M726 790L734 784M761 807L759 805L755 801M778 782L779 792L783 801L785 807M778 782L772 783L767 783L761 785M761 785L757 790M750 763L753 770L758 777L761 785M736 761L734 769L734 776L734 784M711 780L715 782L720 787L726 790M790 758L787 765M790 758L796 754L802 751L807 748M787 775L795 777L802 781L807 784M787 775L787 765M758 753L768 757L777 763L787 765M774 734L763 733M774 734L779 742L785 750L790 758M774 734L779 730L785 728L791 725M791 725L796 731L802 736L807 740M778 782L787 775M791 725L791 719L792 713L794 708M794 708L799 705L804 704L807 702M111 698L120 697L129 697L139 696M113 659L124 663L134 668L145 673M145 673L143 680L142 687L141 694M139 696L141 694M142 732L144 729M139 696L140 707L143 718L144 729M112 595L113 608L114 620L115 633M236 631L229 635L222 635L215 636M211 660L212 654L214 645L215 636M207 601L207 610L207 618L206 627M215 636L206 627M566 583L576 583M566 583L558 579M558 579L560 573L562 567L564 560M576 583L579 575L581 568L583 560M583 560L577 561L571 560L564 560M549 579L558 579M549 579L545 575L542 571L537 568M537 568L542 558M559 553L564 560M585 559L583 560M579 585L576 583M444 569L445 557L445 545L447 532M484 597L482 588L479 579L476 570M484 597L494 598L504 597L514 600M476 570L477 568M477 568L491 568L505 569L519 568M514 600L516 590L518 581L521 571M521 571L519 568M482 599L484 597M444 569L455 570L465 570L476 570M485 537L483 547L481 558L477 568M485 537L472 535L460 534L447 532M486 537L493 537L500 536L507 537M507 537L512 541M512 541L513 550L515 559L519 568M541 601L532 600L524 600L514 600M541 601L545 594L548 587L549 579M537 568L531 569L526 570L521 571M533 538L526 539L519 541L512 541M585 624L577 628M585 624L583 618L581 613L577 608M577 628L570 621L559 619L551 612M577 608L572 607L566 608L561 606M561 606L551 611M573 659L569 656M569 656L568 651L568 645L568 640M590 625L585 624M568 640L570 635L574 632L577 628M584 596L577 608M547 627L548 622L550 617L551 612M547 627L554 630L560 637L568 640M566 583L565 591L563 598L561 606M541 601L545 604L547 609L551 611M549 659L543 666M549 659L546 650L543 642L539 633M543 666L535 662L526 662L517 658M517 658L516 651L516 643L515 636M539 633L531 634L524 634L516 634M515 636L516 634M569 656L562 657L556 658L549 659M544 685L544 679L542 672L543 666M547 627L539 633M512 666L517 658M486 636L495 637L505 636L515 636M514 600L515 611L516 622L516 634M274 468L275 459L276 451L278 442M274 468L265 469L256 469L247 471M278 442L267 440L256 439L246 436M247 471L244 468M244 468L244 458L244 448L244 438M244 438L246 436M244 502L245 492L246 482L247 471M282 475L274 468M219 467L228 466L236 468L244 468M211 440L222 439L233 438L244 438M246 411L245 419L245 427L246 436M351 447L346 446L342 441L337 440M313 465L313 459L314 453L316 447M316 447L323 447L330 443L337 440M355 404L350 407L346 412L340 416M340 416L339 424L337 432L337 440M318 382L317 389L314 395L312 402M340 416L330 412L322 406L312 402M794 509L790 512L786 516L781 519M789 538L782 534M781 519L780 524L781 529L782 534M766 554L768 549L767 544L769 539M782 534L769 539M742 538L750 537L759 538L767 538M769 539L767 538M744 514L748 517M744 514L741 507L741 499L739 491M748 517L756 516M756 516L765 511M740 490L748 491L757 492L766 493M765 511L766 506L766 500L768 495M768 495L766 493M719 517L727 517L736 516L744 514M742 538L743 531L745 524L748 517M717 496L724 494L731 492L739 491M767 538L763 531L760 524L756 516M781 519L775 518L770 515L765 511M740 476L739 480L741 485L740 490M762 470L763 478L765 485L766 493M782 491L777 492L773 494L768 495M114 249L111 252M76 224L77 231L75 239L75 246M111 252L99 250L87 249L75 246M143 281L137 286M137 286L129 282L120 281L111 280M111 252L112 262L111 271L111 280M43 342L54 345L65 348L76 352M42 342L42 355L42 367L43 379M76 352L74 358L76 364L75 371M75 371L66 374L57 378L48 383M48 383L43 379M9 307L20 306L32 309L43 311M43 311L46 315M46 315L46 324L43 333L43 342M15 347L24 344L33 344L42 342M14 383L24 382L33 380L43 379M53 406L51 398L48 391L48 383M80 349L80 340L82 331L84 321M80 349L89 351L99 353L109 353M109 353L116 345M116 345L113 336L110 326L107 316M84 321L91 318L98 316L105 315M105 315L107 316M75 314L66 314L56 314L46 315M75 314L84 321M76 352L80 349M75 314L76 303L76 293L78 282M106 285L96 285L87 283L78 282M106 285L104 295L105 305L105 315M137 286L139 295L139 304L140 313M140 313L129 314L118 315L107 316M106 285L111 280M82 402L84 396L84 390L84 384M82 402L91 404L98 410L107 411M84 384L95 384L104 378L114 376M107 411L115 407M115 407L116 398L118 389L119 380M114 376L119 380M71 411L75 409L77 404L82 402M75 371L77 376L80 380L84 384M105 440L106 431L106 421L107 411M109 353L112 360L113 368L114 376M137 415L129 413L122 409L115 407M147 384L141 378M141 378L134 379L126 380L119 380M188 113L189 121L192 128L196 134M188 113L196 112L204 114L213 113M196 134L201 133L206 134L211 133M211 133L213 132M213 132L212 126L213 120L213 113M233 155L231 148L231 141L230 134M233 155L227 158L221 157L215 158M211 133L211 141L212 148L213 156M215 158L213 156M213 132L218 133L224 134L230 134M186 143L185 148L187 153L187 158M186 143L179 140L173 138L167 134M162 136L163 148L161 159L163 170M162 136L167 134M163 170L170 165L179 163L187 158M196 134L186 143M213 156L204 155L196 156L187 158M170 115L168 121L169 127L167 134M185 110L188 113M150 137L162 136M157 176L163 170M190 187L197 180M197 180L194 173L190 165L187 158M213 180L208 179L203 180L197 180M213 180L213 173L214 166L215 158M145 318L155 318L164 315L173 315M145 318L143 326L141 334L140 342M147 351L140 342M147 351L156 351L165 352L174 352M174 352L180 347M180 347L177 337L175 326L174 315M140 313L145 318M171 283L173 294L172 304L173 315M116 345L124 343L132 342L140 342M141 378L142 369L146 360L147 351M173 384L171 373L173 363L174 352M204 351L196 349L188 348L180 347M203 310L193 312L184 313L174 315M209 285L199 282L189 279L179 275M425 189L420 187L414 185L409 184M425 189L425 195L425 201L425 207M425 207L417 207L408 207L400 208M407 186L409 184M407 186L404 192L400 198L396 204M396 204L400 208M429 156L420 157L413 161L405 163M405 163L408 170L408 177L409 184M432 183L425 189M404 230L403 223L402 215L400 208M382 180L390 182L398 184L407 186M382 180L380 182M396 204L382 204M380 182L380 189L381 196L382 204M317 276L314 269L314 263L313 256M313 256L308 252L303 248L298 244M277 282L278 270L275 257L276 244M298 244L291 243L284 243L277 243M380 182L371 182L363 181L354 180M382 204L379 206M379 206L373 205L367 205L360 202M360 202L358 195L355 188L354 181M177 249L188 248L199 246L211 248M214 282L216 272L217 263L217 254M211 248L217 254M192 218L198 222L205 225L212 227M211 248L211 241L212 234L212 227M382 180L382 174L384 169L385 163M354 180L355 174L357 168L358 162M358 162L365 160L372 160L379 158M379 158L385 163M405 163L400 160M385 163L390 163L394 160L400 160M409 133L401 141M400 160L400 154L400 148L401 141M330 43L324 43L317 43L311 44M309 68L316 68L322 68L330 68M309 68L307 65M307 65L309 58L310 51L311 44M281 24L281 31L282 37L282 43M305 21L306 27L306 33L307 40M307 40L298 39L290 42L282 43M307 40L311 44M237 62L244 64L251 66L258 67M260 42L265 48M258 67L260 60L263 54L265 48M307 65L300 66L294 64L288 63M282 43L281 45M288 63L285 57L282 51L281 45M265 48L270 45L275 45L281 45M372 93L359 94M372 93L383 86M383 86L382 80L380 73L378 66M359 93L359 86L359 79L359 72M359 72L364 70L369 67L375 64M378 66L375 64M396 61L390 63L384 65L378 66M398 90L394 87L388 88L383 86M349 65L359 72M335 92L334 85L334 79L335 72M335 92L343 91L351 92L359 93M372 52L375 64M357 131L358 120M357 131L363 134L370 136L377 138M358 120L366 118L374 116L382 113M381 135L377 138M381 135L384 129L386 122L390 116M390 116L382 113M350 137L357 131M350 137L351 142L350 148L352 153M352 153L358 162M379 158L378 152L376 145L377 138M358 120L358 111L360 103L359 94M372 93L375 100L380 106L382 113M401 141L394 139L388 137L381 135M398 113L390 116M332 95L324 93L316 90L308 87M332 95L330 107M308 87L308 96L307 105L305 114M305 114L312 114L319 114L326 113M330 107L326 113M307 85L308 80L308 74L309 68M307 85L308 87M335 92L332 95M358 120L348 117L339 111L330 107M338 136L330 130M338 136L350 137M330 130L329 124L328 119L326 113M376 227L369 227L362 226L355 225M376 227L379 232L382 236L385 241M385 241L377 251M377 251L368 250L359 250L351 251M355 225L350 228L346 232L342 235M351 251L342 240M342 240L342 235M379 206L379 213L377 220L376 227M360 202L356 207M356 207L355 213L355 219L355 225M396 241L385 241M380 281L379 271L378 261L377 251M346 277L347 268L349 260L351 251M313 256L323 252L333 247L342 240M507 351L508 359L507 367L507 376M536 348L535 353L536 359L536 364M536 364L526 368L517 372L507 376M560 363L554 365L547 366L540 368M536 364L540 368M485 381L493 381L499 377L507 376M514 414L516 405L514 397L516 389M516 389L513 385L509 381L507 376M558 389L553 388L548 388L544 387M558 389L558 395L562 401L561 407M541 389L544 387M541 389L540 396L538 403L538 410M538 410L542 414M542 414L548 414L553 413L558 414M558 414L561 407M540 368L541 374L541 381L544 387M583 407L576 406L569 406L561 407M516 389L524 388L532 389L541 389M514 414L522 412L530 411L538 410M538 433L539 426L540 420L542 414M525 440L516 439M562 428L562 423L558 419L558 414M713 191L720 180M713 191L707 186L700 182L694 178M720 180L718 174L717 168L715 162M715 162L710 162L705 162L700 163M694 178L698 174L698 168L700 163M712 201L713 191M738 181L732 181L726 181L720 180M689 181L694 178M691 156L700 163M788 627L780 630L772 629L765 631M789 628L790 638L787 647L789 657M760 655L769 656L778 658L787 660M760 655L759 648L759 642L759 635M787 660L789 657M765 631L759 635M785 609L786 615L788 621L788 627M807 626L802 626L796 627L789 628M759 606L760 614L762 622L765 631M807 654L798 655L789 657M756 659L760 655M741 630L747 632L753 634L759 635M789 671L797 675L805 680L807 681M789 671L787 660M539 472L533 475M558 487L550 493L542 497L533 501M533 475L532 484L533 493L533 501M538 513L530 506M507 537L511 527L517 518L520 507M520 507L530 506M530 506L533 501M760 685L758 690L759 695L757 699M760 685L765 685L771 684L777 683M777 683L780 691L785 698L790 705M790 705L781 707L772 708L763 710M757 699L763 710M736 705L743 704L749 699L757 699M757 681L760 685M789 671L784 674L780 678L777 683M794 708L790 705M761 731L762 724L763 717L763 710M180 738L182 730M144 729L148 728M169 727L179 727M182 730L179 727M212 760L211 754L210 741L210 738M182 730L191 728L200 728L201 728M221 701L216 704M216 704L216 707M145 673L151 667M115 633L124 633L133 632L143 632M143 632L146 643L149 654L151 667M282 438L292 439L301 442L311 442M282 438L281 429L280 419L279 408M311 442L310 430L309 418L308 405M308 405L299 405L291 406L282 406M282 406L279 408M278 442L282 438M316 447L311 442M248 410L258 409L269 408L279 408M312 402L308 405M278 380L279 389L281 397L282 406M72 250L73 260L76 270L76 281M72 250L63 250L55 253L46 252M76 281L67 284L57 286L47 289M43 255L46 252M43 255L42 262L38 268L37 276M37 276L40 280L44 284L47 289M75 246L72 250M36 218L38 230L42 241L46 252M43 311L44 303L45 296L47 289M10 245L21 248L32 252L43 255M15 278L22 277L29 277L37 276M288 89L287 81L286 74L284 67M288 89L282 94M282 94L275 91L268 87L261 83M284 67L277 69L269 72L261 72M261 83L261 72M307 85L301 87L294 87L288 89M288 63L284 67M260 114L268 112L275 109L282 107M260 114L257 111M257 111L255 104L255 97L254 90M282 107L282 94M254 90L261 83M258 67L261 72M236 112L229 112L221 113L214 111M236 112L235 105L238 98L236 91M233 89L236 91M233 89L226 91L218 92L211 93M211 93L212 99L213 105L214 111M239 116L236 112M239 116L237 130M213 113L214 111M237 130L230 134M257 111L251 112L245 115L239 116M254 90L248 91L242 91L236 91M232 69L233 75L231 82L233 89M209 91L211 93M314 221L311 212M314 221L320 224L327 225L334 226M311 212L319 209L326 203L334 199M334 226L335 219L335 212L337 206M334 199L337 206M304 205L311 212M304 205L299 206L293 208L288 209M288 209L285 221L280 232L277 243M298 244L303 237L309 229L314 221M342 235L334 226M356 207L350 206L344 206L337 206M334 183L340 182L347 181L354 181M334 183L333 189L334 194L334 199M352 153L345 157L337 160L330 164M332 183L333 176L330 170L330 164M338 136L333 142L329 149L325 156M325 156L330 164M235 225L239 232L242 239L246 246M235 225L239 219L241 211L246 205M246 205L256 204M256 204L260 217L266 229L270 242M270 242L262 243L255 245L248 246M217 254L227 251L236 249L246 246M212 227L218 221M218 221L224 223L230 223L235 225M245 288L247 274L246 261L248 246M276 244L270 242M308 143L311 137M308 143L300 139L293 135L284 133M311 137L309 130L307 122L304 115M284 133L286 127L288 122L289 116M289 116L294 117L299 115L304 115M330 130L324 132L318 135L311 137M309 154L314 154L319 154L325 156M309 154L308 143M282 107L289 116M512 470L502 473L492 477L481 480M512 471L510 481L512 491L511 500M511 500L502 502L492 502L482 503M481 480L481 487L480 493L479 500M482 503L479 500M510 445L511 453L511 462L512 470M533 475L526 474L519 473L512 471M476 472L481 480M520 507L511 500M486 537L484 525L483 514L482 503M447 503L458 501L468 501L479 500M177 701L177 689L177 685M177 683L178 677L177 665M177 701L187 698L196 696L206 693M206 693L206 684L207 677M205 665L197 666L187 665L177 664M141 694L153 697L165 697L177 701M179 727L177 718L178 710L177 701M151 667L160 666L168 666L177 665M216 704L214 700L209 697L206 693M145 630L155 630L165 629L175 629M145 630L145 618L147 607L146 594M174 598L175 609L174 619L175 629M174 598L165 597L157 595L148 593M143 632L145 630M177 664L177 653L177 641L175 629M112 595L124 595L135 594L146 594M184 591L174 598M206 627L196 628L186 629L175 629M149 565L148 574L148 584L148 593M255 152L262 161M255 152L256 139M262 161L268 158L275 157L282 154M256 139L263 134M263 134L269 136L275 135L281 135M281 135L281 142L283 148L282 154M233 155L235 157M235 157L242 156L248 152L255 152M237 130L244 132L250 136L256 139M260 114L259 121L262 127L263 134M284 133L281 135M241 202L239 195L235 188L232 180M241 202L234 205L226 204L219 206M215 202L217 195L216 189L216 182M215 202L219 206M216 182L221 181L226 181L232 180M218 221L219 216L218 211L219 206M246 205L241 202M191 207L199 205L207 203L215 202M213 180L216 182M235 157L236 163L237 169L237 176M237 176L232 180M288 209L279 201M256 204L260 200M279 201L273 201L266 200L260 200M237 176L245 175L252 178L261 177M260 200L259 193L261 185L261 177M262 161L260 166L260 171L261 176M306 191L314 184M306 191L299 188L293 185L286 182M314 184L310 176L307 168L303 161M286 182L285 179M285 179L286 173L290 168L291 163M291 163L303 161M304 205L305 200L305 196L306 191M332 183L326 182L320 184L314 184M279 201L281 195L283 188L286 182M309 154L303 161M261 176L269 177L276 179L285 179M282 154L291 163" fill="none" stroke="#636464" stroke-width="1"/>
<g fill="#2a4868" stroke="none">
<path d="M299 60 L304 56.2 L309 55.5 L312.8 58.8 L315.2 65 L316.5 71.2 L321.5 72.5 L324 75 L321.5 80 L322.8 86.2 L324 95 L321.5 96.2 L319 87.5 L315.2 82.5 L312.8 75 L309 67.5 L305.2 62.5 L301.5 63.8Z"/>
<path d="M368.5 261.8 L371.5 260 L375.2 258.5 L380.2 261.8 L385.2 264.2 L390.2 268.5 L394 273 L396.5 276.8 L392.8 275.5 L387.8 271.8 L382.8 269.2 L377.8 265.5 L372.8 263Z"/>
<path d="M447.8 363 L451 365.5 L449 369.2 L445.2 373 L441.5 377.5 L438.5 375.5 L441.5 370.5 L444 366.8Z"/>
<path d="M605.5 306.8 L609.2 304.2 L612.5 302.5 L613 296.8 L612 290.5 L614 285.5 L615.5 289.2 L617 292.2 L619.2 291 L621 286.8 L622.5 290.5 L624 293.5 L627.5 293.8 L625 296.8 L621.8 299.2 L619.2 302.5 L616.8 305 L614.2 309.2 L610.5 312.5 L606.8 313.5 L604.8 310.5Z"/>
<path d="M424 413.5 L426.5 416 L427.8 422.2 L430.2 427.2 L431.5 433.5 L429 434 L427 429.8 L425.2 424.8 L424 418.5Z"/>
<path d="M526.5 502.2 L530.2 506 L531.5 513.5 L530.2 521 L534 524.8 L536.5 528.5 L532.8 533.5 L531.5 539.8 L527.8 536 L525.2 528.5 L526.5 521 L527.8 513.5 L526 507.2Z"/>
<path d="M541.2 615.3 L540.3 610 L539.6 605.1 L541.7 603 L543.5 607.9 L546.6 612.1 L550 611.1 L551.9 606.1 L554.7 604.7 L556.1 608.9 L564 609.3 L563.5 612.5 L556.1 614.4 L550.8 615.3 L547.3 619.7 L543.8 617.9Z"/>
<path d="M784.1 731.5 L786.7 735.9 L790.3 739.4 L794.7 742.9 L796.4 747.3 L795.5 751.7 L792.9 754.4 L789.4 752.6 L786.7 748.2 L785 743.8 L783.8 737.7Z"/>
<path d="M769.2 791.3 L771.8 789.9 L775.3 789.5 L778.8 790.4 L778.8 793 L769.2 793Z"/>
<path d="M122.3 657.5 L126 653.7 L132.3 652.5 L136 656.2 L136 662.5 L132.3 667.5 L126 668 L122.3 663.7Z"/>
<path d="M42.4 681.2 L46.2 679.9 L49.9 683.7 L51.2 688.7 L47.4 688.7 L43.7 684.9Z"/>
<path d="M58.6 684.9 L61.1 686.2 L63.6 693.7 L68.6 699.9 L74.9 703.6 L82.4 705.4 L84.4 709.4 L79.9 710.4 L72.4 707.4 L65.4 703.6 L61.1 698.6 L57.9 692.4 L56.9 688.7Z"/>
<path d="M144.7 697.4 L149.7 695.4 L153.5 698.6 L151 702.4 L154.2 705.4 L152.2 711.1 L147.2 714.4 L142.3 713.6 L140.3 708.6 L144.7 705.4 L147.2 701.9Z"/>
</g>
<g fill="none" stroke="#866f10" stroke-width="1">
<path d="M182.5 6.2 L192.5 20 L200 37.5 L200 92.5 L192.5 107.5 L185 125 L175 150 L160 180 L147.5 203 L145 203 L152.5 223 L165 228 L167.5 253 L172.5 283 L172.5 313 L177.5 343 L183.8 368 L183.8 383 L177.5 406 L175 406 L165 426 L162.5 443.5 L156.2 463.5 L151.2 478.5 L140 501 L133.8 526 L130 556 L128.8 586 L126.2 609 L124 640 L118 660 L100 685 L92 700"/>
<path d="M6.2 256.8 L50 254.2 L100 240.5 L137.5 225.5 L162.5 225.5 L175 223 L207.5 205.5 L217.5 197.5 L240 182.5 L265 172.5 L284 168.8 L284 168.8 L314 160 L346.5 150 L384 140 L405.2 135"/>
<path d="M162.5 221.8 L172.5 221 L175.8 226.8 L172.5 231.8 L163.8 231 L161.2 226.8 L162.5 221.8"/>
<path d="M284 60 L309 72.5 L359 95 L384 117.5 L405.2 135 L424 155 L444 180 L469 200 L464 203 L479 225.5 L491.5 233 L504 240.5"/>
<path d="M471.5 6.2 L469 37.5 L459 55 L424 92.5 L409 117.5 L405.2 135 L399 162.5 L396.5 203 L397.8 203 L399 238 L394 258 L396.5 278 L395.2 303 L400.2 328 L401.5 353 L405.2 378 L406.5 406 L407.8 406 L414 421 L424 441 L431.5 456 L439 471.5 L434 486 L424 506 L409 531 L394 551 L379 566 L359 581 L334 596 L309 609 L300 612 L292 620 L300 628 L312 634"/>
<path d="M394 127.5 L401.5 122.5 L411.5 123.8 L416.5 131.2 L414 140 L406.5 145 L397.8 142.5 L393.5 135 L394 127.5"/>
<path d="M405.2 135 L434 132.5 L474 140 L509 140 L534 150 L568 160 L568 158.8 L593 160 L614.2 150 L638 150 L658 142.5 L670.5 152.5 L675.5 165 L684.2 175 L685.5 185 L703 190 L728 186.2 L758 178.8 L780.5 173.8 L805.5 172.5"/>
<path d="M586.8 6.2 L588 25 L598 40 L604.2 55 L600.5 75 L604.2 95 L591.8 110 L600.5 125 L609.2 137.5 L614.2 148.8"/>
<path d="M658 142.5 L688 125 L718 110 L743 95 L768 82.5 L805.5 72.5"/>
<path d="M559 203 L524 235.5 L504 240.5 L496.5 265.5 L476.5 298 L459 325.5 L439 343 L419 363 L405.2 378 L389 388 L366.5 400.5 L341.5 406 L341.5 406 L309 438.5 L284 464.8 L284 466 L260 473.5 L250 493.5 L237.5 513.5 L236.2 526 L225 541 L216.2 556 L215 576 L210 596 L203.8 609 L200 625 L190 650 L175 670"/>
<path d="M6.2 459.8 L37.5 463.5 L75 469.8 L95 476 L112.5 473.5 L135 473 L147.5 479.8 L175 478.5 L212.5 476 L250 474 L260 473.5"/>
<path d="M406.5 378 L419 365.5 L444 361.8 L471.5 364.2 L496.5 360.5 L521.5 354.2 L546.5 351.8 L568 346.8 L568 346.8 L584.2 353 L618 360.5 L680.5 368 L718 371.8 L753 373 L775.5 363 L805.5 345.5"/>
<path d="M524 235.5 L536.5 250.5 L544 278 L549 298 L556.5 310.5 L559 320.5 L568 321.8 L568 323 L575.5 333 L580.5 343 L585.5 358 L595.5 378 L603 395.5 L606.8 406 L613 406 L628 421 L635.5 433.5 L630.5 451 L629.2 481 L630.5 506 L638 526 L645.5 541 L650.5 566 L655.5 591 L661.8 609 L668 625 L680 650 L700 690 L725 720 L745 760 L755 800"/>
<path d="M584.2 338 L591.8 343 L593 353 L588 360.5 L579.2 359.2 L575.5 350.5 L578 341.8 L584.2 338"/>
<path d="M439 471.5 L459 472.2 L484 463.5 L509 448.5 L524 428.5 L544 408.5 L563 393 L573 368 L584.2 345.5 L608 323 L643 310.5 L685.5 283 L728 256.8 L758 240.5 L805.5 223"/>
<path d="M635.5 431 L648 443.5 L673 456 L708 466 L743 471.5 L768 476 L793 484.8 L805.5 493.5"/>
<path d="M805.5 536 L800.5 556 L790.5 581 L785.5 601 L784.2 609 L787.1 589.3 L784.2 599.1 L786.2 618.8 L789.1 638.5 L787.1 650.3 L791.1 662.2 L798 676 L803.9 687.8 L805.9 700"/>
<path d="M6 690 L30 682 L60 662 L90 650 L130 643 L165 645 L200 652 L240 646 L270 640 L300 628 L330 632 L380 636 L420 628 L450 622 L480 618 L500 615 L530 622 L560 632 L600 640 L650 650 L700 655 L745 660 L780 655 L790 650"/>
<path d="M6 638 L20 650 L50 660 L70 680 L100 692 L125 705 L150 700 L175 680 L180 660"/>
<path d="M725.5 203 L738 215.5 L758 240.5 L768 278 L780.5 288 L805.5 308"/>
<path d="M740.5 258 L755.5 273 L780.5 288"/>
<path d="M718 190 L728 186.2"/>
</g>
<g fill="none" stroke="#000" stroke-width="1">
<path d="M6.2 105 L155 105 L156.2 112.5 L161.2 115 L160 122.5 L155 127.5 L150 135 L143.8 142.5 L137.5 149.5 L187.5 149.5"/>
<path d="M200 6.2 L199.3 8.4 L199.9 9.8 L202.2 10.4 L204.8 10.7 L205.8 12 L204.6 14.4 L203.2 17 L203.7 18.5 L206.6 18.7 L209.9 19.6 L210.5 21 L208.5 22.9 L206.1 24.9 L205.9 26.5 L208.4 26.8 L208.3 30.2 L206.7 31.1 L203.9 29.9 L200.5 31.5 L201.8 33.1 L204 34.6 L204.7 36.3 L203.8 38.2 L203.1 40.6 L204.2 41.8 L205.9 42.5 L207.4 43.4 L208.4 44.7 L209 46.3 L209.8 47.8 L210.9 48.9 L211.5 50.3 L212.1 51.7 L212.3 53.2 L212.2 54.7 L212.3 56.6 L213.8 57.4 L215.5 57.7 L217.3 57.9 L218.7 58.8 L220.2 60.2 L221.8 59.4 L222.8 57.8 L223.3 55.9 L224.3 54.4 L226.3 53.7 L226.6 55.5 L227.5 56.9 L229.1 57.6 L230.8 58.3 L232 59.9 L231.6 61.5 L231.2 63.1 L231.3 64.6 L232 66 L232.8 67.7 L232 69.3 L230.7 70.7 L229.4 72 L228.6 73.8 L229.2 75.3 L229.6 76.9 L229.8 78.4 L230 80 L229 81.5 L228.1 83.1 L227.2 84.7 L226.2 86.2 L226.5 87.7 L226.7 89.2 L227 90.8 L227.2 92.3 L227.5 93.8 L226.3 95.1 L225 96.3 L223.7 97.5 L222.5 98.8 L221.2 98 L220 97.1 L218.7 96.3 L217.5 95.5 L216.3 94.6 L215 93.8 L214.1 95.4 L213.2 96.9 L212.2 98.5 L211.2 100 L210.1 101.1 L209.1 102.4 L208.3 103.8 L207.4 105.1 L206.1 106.3 L205.6 104.6 L205.1 103.1 L204.1 101.7 L202.9 100.4 L202.8 99.2 L200.6 99.9 L198.2 101.3 L198.9 102.9 L200 104.4 L200.2 105.6 L201.7 106.5 L203.2 107.6 L204.6 107.2 L204.1 108.8 L203.5 110.3 L202.5 111.5 L201.3 112.5 L200 113.5 L199.1 114.8 L198.4 116.2 L197.8 117.6 L197 119.1 L196 120.5 L195 121.9 L194.3 123.4 L193.9 125.1 L192.8 126.2 L191.5 127.1 L190 127.5 L190.2 129.2 L191 130.5 L192.4 131.3 L194.1 132 L195.3 133 L195.3 135.2 L193.1 135.9 L191.9 137.2 L192.6 139.5 L193.7 141.9 L193 143.4 L190.3 143.8 L187.6 144.2 L187 145.6 L188.4 148.2 L189.9 148.6 L190.1 150.4 L187.8 153.2 L186.8 155.5 L189.3 155.3 L189.6 158.3 L189 160.1 L186.9 159.9 L183.9 160.4 L183.8 162.3 L185.7 163.3 L187.9 164.2 L188.1 167.4 L186.1 167.1 L184.1 166.9 L182.6 167.7 L181.5 169.3 L180.2 170.6 L178.7 171 L177 170.9 L175.3 171 L173.9 171.6 L172.5 172.5 L172.7 174.2 L172.4 175.8 L171.4 177.2 L170.5 179.2 L171.6 180.7 L173.5 181.6 L175.1 182.8 L175.3 185.2 L173.2 185.6 L171.8 186.5 L171.7 188.5 L172 190.7 L170.4 192.9 L168.4 191.9 L166.3 190.5 L163.6 191.8 L164.5 194.3 L165 196.6 L163.1 198 L160.4 198.1 L158.9 199.3 L158.8 201.7 L157.5 204.3 L155.2 202.9 L154.7 204.8 L155.2 206.3 L156.4 207.5 L157.5 208.8 L158 210.3 L158.1 212 L158.2 213.6 L158.7 215.1 L159.4 216.5 L160.2 218.1 L159.8 219.5 L159.2 220.9 L158.7 222.4 L158.2 223.8 L157.9 225.3 L157.5 226.8 L156 227.6 L154.5 228.3 L153 229 L151.5 229.7 L150 230.5 L148.8 231.5 L147.5 232.4 L146.3 233.3 L145 234.2 L144.1 235.8 L143.3 237.5 L142.5 239.2 L143.8 240.4 L145 241.7 L146.2 243 L147.5 244.2 L146.6 245.8 L145.7 247.4 L144.7 248.9 L143.8 250.5 L142.3 250.7 L140.8 251 L139.2 251.3 L137.7 251.6 L136.2 251.8 L135 250.8 L133.7 249.8 L132.4 249 L131.3 248 L131.1 249.5 L130.7 251 L130.3 252.5 L130.1 254 L130 255.5 L128.9 256.9 L127.6 258.1 L126.2 259.2 L124.9 260.5 L125.4 262 L126.1 263.5 L126.6 265 L127.1 266.5 L127.5 267.9 L125.7 268.7 L124.2 269.6 L122.8 270.4 L123.3 271.9 L123.5 273.5 L123.5 275.2 L124 276.7 L125 278 L125.2 279.7 L124.8 281.3 L123.5 282.5 L122 283.7 L121.4 285.8 L123.1 287.1 L124.9 288.4 L124.2 291.6 L122.1 290.4 L120.2 289.6 L118.8 290.7 L117.9 293.2 L117.3 294.8 L115.2 294.9 L112.4 293.7 L110.5 294.1 L109.9 296.8 L111 299 L110.2 300.5 L107.9 301.4 L107 301.5 L105.6 302.4 L104.6 304.2 L103.4 305.6 L101.8 305.8 L99.8 305.6 L99.7 307.3 L100.4 308.7 L101.6 310 L102.6 311.3 L102.7 313.4 L100.9 313.5 L99.1 313.7 L97.6 314.5 L96.5 315.4 L97.7 316.6 L98.1 318.3 L97.9 320.3 L98.2 322 L99.8 322.7 L99 324.7 L97.7 325.9 L95.6 325.4 L93.2 324.5 L91.6 325.2 L91.2 328.1 L90.6 330.7 L88.4 330.7 L85 331.7 L85.6 333.6 L88.5 333.2 L91.6 332.6 L93 336.5 L89.6 336.7 L87.3 337.4 L87.6 339.7 L88.7 340.9 L90 341.9 L89.8 344 L89.4 346.2 L91 345.3 L89.3 346.9 L87.7 348.4 L85.8 348.4 L83.5 347.8 L82.3 348.8 L81.6 350.3 L81.1 351.9 L80.3 352.7 L81.4 353.8 L82.4 355 L83.6 356.1 L85 356.6 L83.3 357.2 L81.5 357.6 L79.7 357.6 L77.9 357.5 L75.9 358.1 L77 359.5 L78 360.8 L78.8 362.4 L79.2 364 L79.7 365.2 L78.6 366.2 L77.6 367.4 L76.5 368.6 L75.3 369 L75.9 370.5 L76.7 372 L77.8 373.1 L79.1 374.2 L80.1 375.8 L78.4 376.5 L76.6 377 L75 378.2 L76.7 378 L78.3 377.9 L80 377.9 L81.7 378 L83.3 378 L85 378 L84.5 379.5 L84 381 L83.5 382.5 L83 384 L82.5 385.5 L83 387 L83.5 388.5 L84 390 L84.5 391.5 L85 393 L84.8 394.5 L84.5 396 L84.3 397.5 L84.1 399 L83.8 400.5 L82.5 401.6 L81.3 402.7 L80 403.8 L78.8 404.9 L77.6 405.9 L78.5 407.2 L79.3 408.5 L80.1 409.9 L81 411 L80.9 412.7 L80.8 414.4 L80.2 416.2 L78.9 417.1 L77.6 418.1 L76.8 419.5 L76.1 420.8 L77.5 419.6 L79.2 419.3 L81.1 419.6 L81.6 419.1 L83 420 L84.9 420.6 L86.3 421.5 L86.7 423.8 L84.8 424.7 L83.6 425.9 L83.6 427.8 L84 429.9 L83.5 431.5 L81.7 432.7 L80 433.9 L79.5 436.3 L81.1 437.3 L82.2 438.6 L82.6 440.3 L82.7 442.2 L83.3 443.2 L82.8 445 L82.3 446.9 L81.3 448.4 L80 450 L81.7 450 L83.2 449.5 L84.6 448.6 L86.6 447.9 L87.8 448.9 L88.5 450.6 L89.3 452.2 L90.3 451.8 L91 454.1 L91.1 456.3 L89 457.7 L86.3 456.5 L84.6 457.3 L84.5 459.4 L87 460 L86.7 462.3 L84.9 465.5 L87.5 468.8 L89.1 466.5 L90.7 463.7 L92.2 463.2 L94.2 465.7 L93.1 468.6 L93.8 470.1 L96.5 470 L99.3 469.8 L100.7 473.2 L97.8 473.8 L95.5 474.7 L95.8 476.4 L94.9 478.8 L93.4 480 L91.2 479.8 L91.1 481.7 L91.9 483.1 L93.3 484.4 L93.7 486.6 L92.2 486.1 L90.7 485.3 L89.2 484.7 L87.3 484.6 L86.4 486.2 L85.4 487.7 L83.9 488.7 L82.3 490.2 L83.7 491.3 L85.7 491.6 L87.7 491.8 L89.3 493.8 L87.4 494.8 L86 496.1 L85.8 498.1 L86 499.6 L86.3 501.2 L85.6 502.9 L84.9 504.6 L85.8 505.1 L84.7 506.7 L83.5 508.2 L81.8 508.6 L79.9 508.4 L78.1 509.1 L77.2 510.7 L76.5 512.5 L75.4 513.9 L73.8 514.8 L72.2 515.7 L71 517 L70 518.5 L68.9 519.6 L67.6 520.5 L66.2 521.3 L64.9 522.3 L66.5 523 L68 523.7 L69.5 524.4 L71 525.2 L72.5 526 L70.8 526.8 L69.2 527.7 L67.5 528.5 L65.8 528.9 L64.2 529.4 L62.5 529.8 L62.2 531.3 L61.9 532.9 L61.5 534.5 L61.2 536 L59.3 536.3 L57.5 536.6 L55.6 536.9 L53.8 537.2 L55.1 538.4 L56.3 539.7 L57.5 541 L58.7 542.2 L59.3 543.8 L59.8 545.5 L60 547.3 L58.5 546.7 L57 546.3 L55.4 546.2 L54 546 L54.4 547.4 L54.5 549 L54.3 550.5 L54.3 552.1 L54.9 553.3 L53.6 554.7 L52.1 555.8 L50.4 556.3 L48.4 557.1 L48.1 558.7 L48.2 560.4 L48.2 562 L47.6 563.2 L49.1 563.8 L50.6 564.4 L52.2 564.7 L53.8 564.8 L53.6 566.5 L53.1 568.2 L52.5 569.7 L50.9 569.7 L49.5 570 L48 570.6 L46.6 571.3 L45.5 570.9 L45.1 572.5 L44.6 574.1 L44.8 575.6 L46 577 L47.3 578.1 L48 579.6 L47.3 581.5 L46.3 583.5 L46.6 585.1 L48.7 586 L49.9 588.4 L49.1 589.9 L46.2 590.3 L43.5 590.9 L45 593.5"/>
<path d="M45 594 L186.2 594 L185 601 L181.2 609 L181 615 L183 625 L186 635 L190 645 L196 652 L203 656"/>
<path d="M6.2 415.5 L80 415.5"/>
<path d="M226.2 53.8 L232.5 47.5 L240 40 L250 41.2 L260 46.2 L265 47.5 L268.8 42.5 L277.5 37.5 L276.2 30 L280 25 L284 22.5 L284 23.8 L299 20 L309 16.2 L305.2 11.2 L304 6.2"/>
<path d="M208.8 104.5 L284 105 L284 105 L310.2 105 L309 88.8 L324 92 L421.5 90.2 L484 93.8 L568 95 L568 95.5 L805.5 97.5"/>
<path d="M635.5 95.5 L650.5 88.8 L675.5 82.5 L680.5 73.8 L695.5 68.8 L698 61.2 L706.8 56.2 L708 48.8 L723 41.2 L738 35 L753 21.2 L761.8 15 L758 11.2 L753 10 L749.2 7"/>
<path d="M761.8 15 L765.5 12.5 L763 20 L768 27.5 L775.5 35 L783 40 L790.5 41.2 L800.5 37.5 L805.5 35"/>
<path d="M788 96.2 L784.2 98.8 L783 107.5 L780.5 112.5 L781.8 117.5 L773 118.8 L765.5 125 L761.8 133.8 L758 138.8 L751.8 138.8 L745.5 136.2 L738 138.8 L730.5 143.8 L724.2 151.2 L718 152.5 L715.5 145 L710.5 143.8 L704.2 148.8 L698 153.8 L693 156.2 L691.8 163.8 L685.5 168.8 L680.5 167.5 L673 171.2 L665.5 175 L655.5 182.5 L648 187.5 L640.5 186.2 L628 188.8 L618 193.8 L610.5 203 L611.8 203 L609.2 209.2 L603 214.2 L595.5 214.2 L590.5 218 L589.2 228 L588 239.2"/>
<path d="M143.8 238.5 L284 238.5 L284 238.5 L299 237.8 L336.5 237.9 L341.5 238.4 L568 239.2 L568 239.2 L678 238.5 L688 234.2 L703 230.5 L710.5 226.8 L720.5 224.2 L730.5 220.5 L740.5 220.5 L805.5 222.5"/>
<path d="M299 237.5 L307.8 248 L306.5 253 L290.2 406 L290.2 406 L284 468.5 L282.5 471 L279.5 513.5 L281 609 L284 652"/>
<path d="M492.8 239.2 L497.8 263 L520.2 406 L520.2 406 L525.2 428.5 L530.2 443.5 L534 453.5 L539 466 L537.8 476 L545.2 481 L536.5 488.5 L532.8 498.5 L534 511 L532.8 538.5 L534 546 L529 576 L535.2 588.5 L539 596 L541.5 609 L542 612 L546 619"/>
<path d="M359.4 643.6 L357.7 642.2 L355.9 637.8 L356.8 633.4 L359.4 628.1 L358.5 622.8 L353.3 619.3 L348 614.1 L341.8 605.3 L342.7 600 L343 597 L345.2 594 L536.5 594"/>
<path d="M547.5 620.5 L744 632 L743.8 631.6 L745.8 642.5 L747.7 649.4 L757.6 650.3 L759.6 638.5 L757.6 624.7 L758.6 614.9 L765.5 610 L775.3 612.9 L785.2 615.9 L795 617.8"/>
<path d="M678 238.5 L675.5 244.2 L668 249.2 L663 255.5 L660.5 263 L666.8 269.2 L674.2 275.5 L681.8 283 L693 283.5 L696.8 288 L699.2 295.5 L704.2 303 L706.8 313 L713 320.5 L718 329.2 L725.5 335.5 L734.2 341.8 L740.5 348 L745.5 355.5 L751.8 361.8 L759.2 366.8 L765.5 374.2 L766.8 383 L770.5 389.2 L775.5 396.8 L780.5 403 L783 406 L783 406 L793 411 L798 418.5 L800.5 428.5 L804.2 436 L805 443.5 L805.5 456"/>
</g>
</g>
<g fill="none" stroke="#e4e4e0" stroke-width="0.95" shape-rendering="auto">
<circle cx="406.5" cy="406.5" r="159.7"/>
<circle cx="406.5" cy="406.5" r="279.9"/>
<circle cx="406.5" cy="406.5" r="400"/>
<circle cx="406.5" cy="406.5" r="520"/>
</g>
<circle cx="407.4" cy="407.4" r="39.0" fill="none" stroke="#ff1010" stroke-width="1.15" shape-rendering="crispEdges"/>
<path d="M419.5 159.2L463.8 114.8" stroke="#e0e0e0" stroke-width="1" fill="none" shape-rendering="auto"/>
<path d="M458.5 99.5L479 80L498 99.2L479 120Z" stroke="#10d040" stroke-width="1" stroke-dasharray="3 3.5" fill="none" shape-rendering="auto"/>
<g fill="none" stroke-width="1" shape-rendering="auto" transform="translate(.5 .5)">
<g stroke="#ffff00"><circle cx="198" cy="9" r="4.1"/><path d="M195.5 9h5"/></g>
<g stroke="#e8641a"><circle cx="185" cy="16" r="4.1"/><path d="M182.5 16h5"/></g>
<g stroke="#ff9900"><circle cx="216" cy="22" r="4.1"/><path d="M213.5 22h5M216 19.5v5"/></g>
<g stroke="#ff9900"><path d="M215.5 30h7"/></g>
<g stroke="#ff9900"><circle cx="243" cy="13" r="4.1"/><path d="M240.5 13h5"/></g>
<g stroke="#ffcc00"><path d="M231.5 16h7"/></g>
<g stroke="#ffcc00"><circle cx="238" cy="30" r="4.1"/><path d="M235.5 30h5M238 27.5v5"/></g>
<g stroke="#ffcc00"><circle cx="223" cy="38" r="4.1"/><path d="M220.5 38h5"/></g>
<g stroke="#e8641a"><circle cx="225" cy="50" r="4.1"/><path d="M222.5 50h5"/></g>
<g stroke="#ffff00"><circle cx="186" cy="46" r="4.1"/><path d="M183.5 46h5M186 43.5v5"/></g>
<g stroke="#ff9900"><path d="M258.5 16h7"/></g>
<g stroke="#ff9900"><path d="M272.5 18h7"/></g>
<g stroke="#ffff00"><circle cx="268" cy="52" r="4.1"/><path d="M265.5 52h5"/></g>
<g stroke="#e8641a"><circle cx="275" cy="51" r="4.1"/><path d="M272.5 51h5M275 48.5v5"/></g>
<g stroke="#e8641a"><circle cx="260" cy="62" r="4.1"/><path d="M257.5 62h5M260 59.5v5"/></g>
<g stroke="#ff9900"><path d="M273.5 81h7"/></g>
<g stroke="#ffcc00"><circle cx="283" cy="88" r="4.1"/><path d="M280.5 88h5"/></g>
<g stroke="#ff9900"><path d="M290.5 12h7"/></g>
<g stroke="#ff9900"><path d="M312.5 16h7"/></g>
<g stroke="#ff9900"><path d="M340.5 44h7"/></g>
<g stroke="#e8641a"><path d="M362.5 52h7"/></g>
<g stroke="#ff9900"><path d="M283.5 66h7"/></g>
<g stroke="#ffff00"><path d="M288.5 79h7M292 75.5v7"/></g>
<g stroke="#ffcc00"><path d="M282.5 81h7"/></g>
<g stroke="#ff9900"><path d="M347.5 72h7M351 68.5v7"/></g>
<g stroke="#ff9900"><path d="M381.5 88h7M385 84.5v7"/></g>
<g stroke="#ffff00"><path d="M388.5 92h7M392 88.5v7"/></g>
<g stroke="#e8641a"><circle cx="378" cy="93" r="4.1"/><path d="M375.5 93h5"/></g>
<g stroke="#e8641a"><path d="M332.5 109h7M336 105.5v7"/></g>
<g stroke="#ffff00"><circle cx="406" cy="98" r="4.1"/><path d="M403.5 98h5M406 95.5v5"/></g>
<g stroke="#ffcc00"><circle cx="442" cy="36" r="4.1"/><path d="M439.5 36h5"/></g>
<g stroke="#e8641a"><circle cx="454" cy="40" r="4.1"/><path d="M451.5 40h5"/></g>
<g stroke="#ffcc00"><path d="M410.5 77h7M414 73.5v7"/></g>
<g stroke="#ffff00"><path d="M468.5 70h7M472 66.5v7"/></g>
<g stroke="#ffcc00"><path d="M439.5 94h7"/></g>
<g stroke="#ffff00"><path d="M428.5 128h7M432 124.5v7"/></g>
<g stroke="#ffff00"><path d="M482.5 149h7M486 145.5v7"/></g>
<g stroke="#ffcc00"><path d="M514.5 156h7M518 152.5v7"/></g>
<g stroke="#ffcc00"><path d="M528.5 156h7M532 152.5v7"/></g>
<g stroke="#ffff00"><circle cx="482" cy="192" r="4.1"/><path d="M479.5 192h5"/></g>
<g stroke="#ffcc00"><circle cx="437" cy="60" r="4.1"/><path d="M434.5 60h5"/></g>
<g stroke="#ffcc00"><circle cx="445" cy="62" r="4.1"/><path d="M442.5 62h5"/></g>
<g stroke="#ffcc00"><circle cx="451" cy="64" r="4.1"/><path d="M448.5 64h5M451 61.5v5"/></g>
<g stroke="#ff9900"><circle cx="446" cy="66" r="4.1"/><path d="M443.5 66h5M446 63.5v5"/></g>
<g stroke="#ffcc00"><circle cx="459" cy="71" r="4.1"/><path d="M456.5 71h5"/></g>
<g stroke="#e8641a"><circle cx="428" cy="68" r="4.1"/><path d="M425.5 68h5"/></g>
<g stroke="#e8641a"><circle cx="432" cy="73" r="4.1"/><path d="M429.5 73h5M432 70.5v5"/></g>
<g stroke="#e8641a"><circle cx="426" cy="76" r="4.1"/><path d="M423.5 76h5M426 73.5v5"/></g>
<g stroke="#ffcc00"><circle cx="434" cy="81" r="4.1"/><path d="M431.5 81h5"/></g>
<g stroke="#e8641a"><circle cx="445" cy="81" r="4.1"/><path d="M442.5 81h5M445 78.5v5"/></g>
<g stroke="#e8641a"><circle cx="422" cy="84" r="4.1"/><path d="M419.5 84h5"/></g>
<g stroke="#ffff00"><circle cx="462" cy="79" r="4.1"/><path d="M459.5 79h5"/></g>
<g stroke="#ffcc00"><circle cx="456" cy="82" r="4.1"/><path d="M453.5 82h5M456 79.5v5"/></g>
<g stroke="#ffff00"><circle cx="462" cy="89" r="4.1"/><path d="M459.5 89h5"/></g>
<g stroke="#ff9900"><path d="M431.5 68h7M435 64.5v7"/></g>
<g stroke="#ff9900"><path d="M426.5 66h7"/></g>
<g stroke="#e8641a"><path d="M420.5 71h7M424 67.5v7"/></g>
<g stroke="#ff9900"><path d="M435.5 78h7M439 74.5v7"/></g>
<g stroke="#00e5ff"><circle cx="460" cy="81" r="4.1"/><path d="M457.5 81h5"/></g>
<g stroke="#ff9900"><circle cx="442" cy="108" r="4.1"/><path d="M439.5 108h5"/></g>
<g stroke="#ff9900"><circle cx="445" cy="111" r="4.1"/><path d="M442.5 111h5"/></g>
<g stroke="#e8641a"><circle cx="435" cy="116" r="4.1"/><path d="M432.5 116h5"/></g>
<g stroke="#ff9900"><circle cx="439" cy="118" r="4.1"/><path d="M436.5 118h5"/></g>
<g stroke="#e8641a"><circle cx="444" cy="118" r="4.1"/><path d="M441.5 118h5"/></g>
<g stroke="#e8641a"><circle cx="453" cy="111" r="4.1"/><path d="M450.5 111h5"/></g>
<g stroke="#e8641a"><path d="M458.5 106h7M462 102.5v7"/></g>
<g stroke="#ff9900"><path d="M460.5 118h7M464 114.5v7"/></g>
<g stroke="#ffcc00"><path d="M457.5 122h7M461 118.5v7"/></g>
<g stroke="#ffff00"><path d="M458.5 127h7M462 123.5v7"/></g>
<g stroke="#e8641a"><circle cx="460" cy="118" r="4.1"/><path d="M457.5 118h5"/></g>
<g stroke="#ffff00"><circle cx="452" cy="131" r="4.1"/><path d="M449.5 131h5"/></g>
<g stroke="#ffff00"><circle cx="452" cy="135" r="4.1"/><path d="M449.5 135h5"/></g>
<g stroke="#ff9900"><circle cx="434" cy="115" r="4.1"/><path d="M431.5 115h5"/></g>
<g stroke="#e8641a"><circle cx="504" cy="72" r="4.1"/><path d="M501.5 72h5"/></g>
<g stroke="#ff9900"><path d="M508.5 72h7M512 68.5v7"/></g>
<g stroke="#ffcc00"><circle cx="518" cy="67" r="4.1"/><path d="M515.5 67h5"/></g>
<g stroke="#ffcc00"><circle cx="534" cy="67" r="4.1"/><path d="M531.5 67h5"/></g>
<g stroke="#ffcc00"><circle cx="540" cy="71" r="4.1"/><path d="M537.5 71h5"/></g>
<g stroke="#ffcc00"><path d="M538.5 68h7M542 64.5v7"/></g>
<g stroke="#ffcc00"><circle cx="530" cy="76" r="4.1"/><path d="M527.5 76h5M530 73.5v5"/></g>
<g stroke="#ff9900"><circle cx="505" cy="80" r="4.1"/><path d="M502.5 80h5"/></g>
<g stroke="#ffcc00"><circle cx="506" cy="85" r="4.1"/><path d="M503.5 85h5"/></g>
<g stroke="#ff9900"><path d="M514.5 81h7M518 77.5v7"/></g>
<g stroke="#ffff00"><circle cx="498" cy="88" r="4.1"/><path d="M495.5 88h5"/></g>
<g stroke="#ffff00"><circle cx="494" cy="100" r="4.1"/><path d="M491.5 100h5"/></g>
<g stroke="#ffff00"><circle cx="498" cy="96" r="4.1"/><path d="M495.5 96h5"/></g>
<g stroke="#ffff00"><circle cx="520" cy="88" r="4.1"/><path d="M517.5 88h5"/></g>
<g stroke="#ffff00"><circle cx="525" cy="86" r="4.1"/><path d="M522.5 86h5M525 83.5v5"/></g>
<g stroke="#ffff00"><circle cx="530" cy="88" r="4.1"/><path d="M527.5 88h5"/></g>
<g stroke="#ffff00"><circle cx="534" cy="86" r="4.1"/><path d="M531.5 86h5M534 83.5v5"/></g>
<g stroke="#ffff00"><circle cx="538" cy="89" r="4.1"/><path d="M535.5 89h5"/></g>
<g stroke="#ffff00"><circle cx="528" cy="91" r="4.1"/><path d="M525.5 91h5"/></g>
<g stroke="#ffff00"><circle cx="533" cy="92" r="4.1"/><path d="M530.5 92h5M533 89.5v5"/></g>
<g stroke="#ffff00"><circle cx="524" cy="95" r="4.1"/><path d="M521.5 95h5"/></g>
<g stroke="#ffcc00"><circle cx="536" cy="93" r="4.1"/><path d="M533.5 93h5"/></g>
<g stroke="#ffcc00"><circle cx="532" cy="85" r="4.1"/><path d="M529.5 85h5"/></g>
<g stroke="#ffcc00"><path d="M535.5 88h7M539 84.5v7"/></g>
<g stroke="#ffcc00"><circle cx="522" cy="90" r="4.1"/><path d="M519.5 90h5M522 87.5v5"/></g>
<g stroke="#ffff00"><path d="M538.5 88h7M542 84.5v7"/></g>
<g stroke="#ffff00"><circle cx="526" cy="98" r="4.1"/><path d="M523.5 98h5"/></g>
<g stroke="#ffcc00"><path d="M531.5 96h7"/></g>
<g stroke="#ffff00"><circle cx="524" cy="106" r="4.1"/><path d="M521.5 106h5"/></g>
<g stroke="#ffff00"><circle cx="524" cy="114" r="4.1"/><path d="M521.5 114h5"/></g>
<g stroke="#ffff00"><circle cx="516" cy="116" r="4.1"/><path d="M513.5 116h5"/></g>
<g stroke="#ff9900"><circle cx="505" cy="116" r="4.1"/><path d="M502.5 116h5"/></g>
<g stroke="#ff9900"><path d="M496.5 118h7"/></g>
<g stroke="#ffff00"><circle cx="537" cy="111" r="4.1"/><path d="M534.5 111h5"/></g>
<g stroke="#ffff00"><path d="M542.5 114h7M546 110.5v7"/></g>
<g stroke="#ffff00"><path d="M543.5 104h7"/></g>
<g stroke="#ffff00"><path d="M536.5 106h7M540 102.5v7"/></g>
<g stroke="#ffff00"><path d="M542.5 122h7"/></g>
<g stroke="#ffff00"><circle cx="538" cy="128" r="4.1"/><path d="M535.5 128h5"/></g>
<g stroke="#ffff00"><path d="M539.5 128h7M543 124.5v7"/></g>
<g stroke="#ffff00"><circle cx="514" cy="126" r="4.1"/><path d="M511.5 126h5"/></g>
<g stroke="#ff9900"><path d="M510.5 135h7M514 131.5v7"/></g>
<g stroke="#ffcc00"><circle cx="488" cy="136" r="4.1"/><path d="M485.5 136h5"/></g>
<g stroke="#ffff00"><circle cx="493" cy="138" r="4.1"/><path d="M490.5 138h5"/></g>
<g stroke="#ff9900"><circle cx="496" cy="132" r="4.1"/><path d="M493.5 132h5"/></g>
<g stroke="#e8641a"><circle cx="500" cy="130" r="4.1"/><path d="M497.5 130h5M500 127.5v5"/></g>
<g stroke="#ffff00"><circle cx="502" cy="135" r="4.1"/><path d="M499.5 135h5"/></g>
<g stroke="#ffff00"><circle cx="504" cy="139" r="4.1"/><path d="M501.5 139h5"/></g>
<g stroke="#ffff00"><circle cx="499" cy="140" r="4.1"/><path d="M496.5 140h5M499 137.5v5"/></g>
<g stroke="#ffcc00"><circle cx="495" cy="141" r="4.1"/><path d="M492.5 141h5"/></g>
<g stroke="#ffcc00"><circle cx="506" cy="136" r="4.1"/><path d="M503.5 136h5"/></g>
<g stroke="#ffff00"><circle cx="508" cy="141" r="4.1"/><path d="M505.5 141h5"/></g>
<g stroke="#ff9900"><circle cx="503" cy="142" r="4.1"/><path d="M500.5 142h5"/></g>
<g stroke="#ff9900"><circle cx="500" cy="145" r="4.1"/><path d="M497.5 145h5"/></g>
<g stroke="#ff9900"><circle cx="498" cy="136" r="4.1"/><path d="M495.5 136h5M498 133.5v5"/></g>
<g stroke="#ffff00"><circle cx="505" cy="132" r="4.1"/><path d="M502.5 132h5"/></g>
<g stroke="#ffff00"><circle cx="509" cy="139" r="4.1"/><path d="M506.5 139h5"/></g>
<g stroke="#e8641a"><circle cx="502" cy="128" r="4.1"/><path d="M499.5 128h5"/></g>
<g stroke="#ff9900"><path d="M492.5 144h7M496 140.5v7"/></g>
<g stroke="#ff9900"><path d="M589.5 12h7M593 8.5v7"/></g>
<g stroke="#ffff00"><circle cx="602" cy="12" r="4.1"/><path d="M599.5 12h5M602 9.5v5"/></g>
<g stroke="#ffff00"><circle cx="612" cy="16" r="4.1"/><path d="M609.5 16h5"/></g>
<g stroke="#e8641a"><path d="M650.5 38h7M654 34.5v7"/></g>
<g stroke="#ff9900"><path d="M570.5 44h7"/></g>
<g stroke="#ff9900"><circle cx="570" cy="58" r="4.1"/><path d="M567.5 58h5"/></g>
<g stroke="#ff9900"><path d="M587.5 96h7M591 92.5v7"/></g>
<g stroke="#ffcc00"><path d="M460.5 256h7M464 252.5v7"/></g>
</g>
</svg>
<span class="t m" style="left:394.6px;top:4.00px;color:#ffffb0;font-size:10px;letter-spacing:0.7px">313</span><span class="t m" style="left:394.6px;top:123.90px;color:#ffffb0;font-size:10px;letter-spacing:0.7px">219</span><span class="t m" style="left:394.6px;top:243.50px;color:#ffffb0;font-size:10px;letter-spacing:0.7px">125</span><span class="t m" style="background:transparent;left:398.2px;top:362.70px;color:#ffffb0;font-size:10px;letter-spacing:0.7px">31</span><span class="t m" style="left:408px;top:164.2px;color:#e8e8e8;font-size:10px;letter-spacing:0.55px">R-2588<b style="color:#e01010;font-weight:400">+</b>1<b style="color:#f8e800;font-weight:400">−</b></span>
<div id="legend"></div><svg width="243" height="45" viewBox="9 759 243 45" style="position:absolute;left:9px;top:759px"><g stroke="#00e8f0" fill="none" stroke-width="1.2"><circle cx="60.5" cy="780.9" r="4"/><path d="M58.1 780.9h4.8"/></g><g stroke="#00e8f0" fill="none" stroke-width="1.2"><path d="M82.1 780.9h7.0"/></g><g stroke="#00e8f0" fill="none" stroke-width="1.2"><circle cx="110.5" cy="780.9" r="4"/><path d="M108.1 780.9h4.8M110.5 778.5v4.8"/></g><g stroke="#00e8f0" fill="none" stroke-width="1.2"><path d="M132.0 780.9h7.0M135.5 777.4v7.0"/></g><g stroke="#f8f000" fill="none" stroke-width="1.2"><circle cx="60.5" cy="793.8" r="4"/><path d="M58.1 793.8h4.8"/></g><g stroke="#f8f000" fill="none" stroke-width="1.2"><path d="M82.1 793.8h7.0"/></g><g stroke="#f8f000" fill="none" stroke-width="1.2"><circle cx="110.5" cy="793.8" r="4"/><path d="M108.1 793.8h4.8M110.5 791.4v4.8"/></g><g stroke="#f8f000" fill="none" stroke-width="1.2"><path d="M132.0 793.8h7.0M135.5 790.3v7.0"/></g></svg>

<div id="copy"></div><span class="t fc" style="letter-spacing:0.03px;left:688.6px;top:793.56px;color:#e8e8e8;font-size:9.2px;">©2005 Astrogenic Systems</span>

<div class="panel" style="top:8px;height:318px"></div>
<div class="panel" style="top:333px;height:113px"></div>
<div class="panel" style="top:453px;height:348px"></div>
<div class="btn" style="left:819px;top:16px;width:56px;height:16px;background:#5c0000"></div>
<div class="btn" style="left:883px;top:16px;width:56px;height:16px;background:#363636"></div>
<div class="btn" style="left:994px;top:16px;width:126px;height:16px;background:#333"></div>
<div class="lbl" style="left:821px;top:64px;width:80px;height:14px"></div>
<div class="lbl" style="left:931px;top:64px;width:80px;height:14px"></div>
<div class="lbl" style="left:1041px;top:64px;width:80px;height:14px"></div>
<div class="rule" style="left:821px;top:217px;width:303px"></div>
<div class="rule" style="left:821px;top:358px;width:302px"></div>
<div class="bar" style="left:925px;top:227px"><i style="width:16px;background:#ff0000"></i></div><div class="bar" style="left:1028px;top:227px"><i style="width:9px;background:#99ccff"></i></div>
<div class="bar" style="left:925px;top:281px"><i style="width:8px;background:#f060b0"></i></div><div class="bar" style="left:1028px;top:281px"><i style="width:16px;background:#00f000"></i></div>
<svg id="graph" width="320" height="280" viewBox="812 530 320 280" style="position:absolute;left:812px;top:530px">
<polyline points="822.4,777.0 824.6,777.0 826.8,777.0 829.1,777.0 831.3,777.0 833.5,777.0 835.7,777.0 837.9,777.0 840.1,777.0 842.4,777.0 844.6,777.0 846.8,777.0 849.0,777.0 851.2,777.0 853.5,769.2 855.7,769.2 857.9,777.0 860.1,777.0 862.3,777.0 864.5,777.0 866.8,777.0 869.0,777.0 871.2,777.0 873.4,777.0 875.6,777.0 877.9,777.0 880.1,777.0 882.3,777.0 884.5,777.0 886.7,769.2 888.9,777.0 891.2,777.0 893.4,777.0 895.6,777.0 897.8,777.0 900.0,777.0 902.3,777.0 904.5,777.0 906.7,777.0 908.9,777.0 911.1,777.0 913.4,777.0 915.6,777.0 917.8,777.0 920.0,777.0 922.2,777.0 924.4,777.0 926.7,777.0 928.9,777.0 931.1,777.0 933.3,777.0 935.5,777.0 937.8,777.0 940.0,777.0 942.2,777.0 944.4,777.0 946.6,777.0 948.8,777.0 951.1,777.0 953.3,777.0 955.5,777.0 957.7,777.0 959.9,777.0 962.2,777.0 964.4,777.0 966.6,777.0 968.8,769.2 971.0,769.2 973.2,761.4 975.5,761.4 977.7,769.2 979.9,777.0 982.1,777.0 984.3,769.2 986.6,761.4 988.8,761.4 991.0,761.4 993.2,777.0 995.4,777.0 997.6,777.0 999.9,777.0 1002.1,777.0 1004.3,777.0 1006.5,777.0 1008.7,777.0 1011.0,777.0 1013.2,777.0 1015.4,777.0 1017.6,777.0 1019.8,777.0 1022.0,777.0 1024.3,769.2 1026.5,761.4 1028.7,769.2 1030.9,777.0 1033.1,777.0 1035.4,777.0 1037.6,777.0 1039.8,769.2 1042.0,777.0 1044.2,777.0 1046.5,777.0 1048.7,777.0 1050.9,769.2 1053.1,753.5 1055.3,761.4 1057.5,769.2 1059.8,777.0 1062.0,777.0 1064.2,777.0 1066.4,777.0 1068.6,777.0 1070.9,777.0 1073.1,777.0 1075.3,777.0 1077.5,777.0 1079.7,777.0 1081.9,777.0 1084.2,777.0 1086.4,777.0 1088.6,777.0" fill="none" stroke="#f01010" stroke-width="1" stroke-linejoin="miter" shape-rendering="crispEdges"/>
<polyline points="822.4,777.0 824.6,777.0 826.8,777.0 829.1,777.0 831.3,777.0 833.5,777.0 835.7,777.0 837.9,777.0 840.1,777.0 842.4,777.0 844.6,777.0 846.8,769.2 849.0,761.4 851.2,777.0 853.5,777.0 855.7,777.0 857.9,777.0 860.1,777.0 862.3,769.2 864.5,769.2 866.8,777.0 869.0,777.0 871.2,777.0 873.4,777.0 875.6,777.0 877.9,777.0 880.1,769.2 882.3,777.0 884.5,777.0 886.7,777.0 888.9,777.0 891.2,777.0 893.4,777.0 895.6,777.0 897.8,777.0 900.0,777.0 902.3,777.0 904.5,777.0 906.7,777.0 908.9,777.0 911.1,777.0 913.4,777.0 915.6,777.0 917.8,777.0 920.0,777.0 922.2,777.0 924.4,777.0 926.7,777.0 928.9,777.0 931.1,777.0 933.3,761.4 935.5,769.2 937.8,769.2 940.0,777.0 942.2,777.0 944.4,777.0 946.6,777.0 948.8,777.0 951.1,777.0 953.3,777.0 955.5,777.0 957.7,777.0 959.9,777.0 962.2,777.0 964.4,769.2 966.6,777.0 968.8,777.0 971.0,777.0 973.2,777.0 975.5,777.0 977.7,761.4 979.9,769.2 982.1,777.0 984.3,777.0 986.6,777.0 988.8,777.0 991.0,777.0 993.2,777.0 995.4,777.0 997.6,753.5 999.9,737.9 1002.1,761.4 1004.3,777.0 1006.5,745.7 1008.7,753.5 1011.0,769.2 1013.2,777.0 1015.4,777.0 1017.6,777.0 1019.8,777.0 1022.0,761.4 1024.3,753.5 1026.5,761.4 1028.7,777.0 1030.9,761.4 1033.1,761.4 1035.4,769.2 1037.6,777.0 1039.8,777.0 1042.0,777.0 1044.2,777.0 1046.5,761.4 1048.7,753.5 1050.9,753.5 1053.1,777.0 1055.3,777.0 1057.5,777.0 1059.8,777.0 1062.0,777.0 1064.2,777.0 1066.4,777.0 1068.6,769.2 1070.9,769.2 1073.1,777.0 1075.3,777.0 1077.5,777.0 1079.7,777.0 1081.9,761.4 1084.2,745.7 1086.4,761.4 1088.6,761.4" fill="none" stroke="#99ccff" stroke-width="1" stroke-linejoin="miter" shape-rendering="crispEdges"/>
<polyline points="822.4,777.0 824.6,777.0 826.8,777.0 829.1,777.0 831.3,777.0 833.5,777.0 835.7,777.0 837.9,777.0 840.1,769.2 842.4,777.0 844.6,777.0 846.8,777.0 849.0,777.0 851.2,777.0 853.5,777.0 855.7,769.2 857.9,769.2 860.1,753.5 862.3,753.5 864.5,769.2 866.8,777.0 869.0,761.4 871.2,769.2 873.4,777.0 875.6,777.0 877.9,777.0 880.1,769.2 882.3,769.2 884.5,769.2 886.7,777.0 888.9,777.0 891.2,777.0 893.4,777.0 895.6,777.0 897.8,777.0 900.0,777.0 902.3,769.2 904.5,777.0 906.7,777.0 908.9,777.0 911.1,769.2 913.4,777.0 915.6,777.0 917.8,777.0 920.0,777.0 922.2,777.0 924.4,777.0 926.7,777.0 928.9,777.0 931.1,777.0 933.3,769.2 935.5,769.2 937.8,769.2 940.0,769.2 942.2,777.0 944.4,777.0 946.6,769.2 948.8,769.2 951.1,769.2 953.3,769.2 955.5,777.0 957.7,777.0 959.9,777.0 962.2,769.2 964.4,761.4 966.6,761.4 968.8,769.2 971.0,777.0 973.2,769.2 975.5,769.2 977.7,777.0 979.9,769.2 982.1,777.0 984.3,769.2 986.6,769.2 988.8,777.0 991.0,769.2 993.2,769.2 995.4,777.0 997.6,769.2 999.9,769.2 1002.1,769.2 1004.3,777.0 1006.5,761.4 1008.7,769.2 1011.0,777.0 1013.2,777.0 1015.4,777.0 1017.6,777.0 1019.8,777.0 1022.0,769.2 1024.3,777.0 1026.5,769.2 1028.7,769.2 1030.9,777.0 1033.1,769.2 1035.4,769.2 1037.6,777.0 1039.8,769.2 1042.0,761.4 1044.2,769.2 1046.5,777.0 1048.7,777.0 1050.9,769.2 1053.1,769.2 1055.3,777.0 1057.5,769.2 1059.8,769.2 1062.0,769.2 1064.2,777.0 1066.4,777.0 1068.6,777.0 1070.9,777.0 1073.1,777.0 1075.3,777.0 1077.5,777.0 1079.7,777.0 1081.9,777.0 1084.2,777.0 1086.4,777.0 1088.6,777.0" fill="none" stroke="#00e000" stroke-width="1" stroke-linejoin="miter" shape-rendering="crispEdges"/>
<polyline points="822.4,777.0 824.6,777.0 826.8,777.0 829.1,777.0 831.3,777.0 833.5,777.0 835.7,777.0 837.9,777.0 840.1,777.0 842.4,777.0 844.6,777.0 846.8,761.4 849.0,745.7 851.2,761.4 853.5,769.2 855.7,769.2 857.9,769.2 860.1,777.0 862.3,777.0 864.5,777.0 866.8,777.0 869.0,777.0 871.2,777.0 873.4,777.0 875.6,777.0 877.9,777.0 880.1,777.0 882.3,777.0 884.5,777.0 886.7,777.0 888.9,777.0 891.2,777.0 893.4,777.0 895.6,777.0 897.8,777.0 900.0,777.0 902.3,777.0 904.5,777.0 906.7,777.0 908.9,769.2 911.1,761.4 913.4,769.2 915.6,777.0 917.8,777.0 920.0,769.2 922.2,769.2 924.4,777.0 926.7,777.0 928.9,777.0 931.1,777.0 933.3,769.2 935.5,769.2 937.8,777.0 940.0,777.0 942.2,777.0 944.4,777.0 946.6,761.4 948.8,753.5 951.1,761.4 953.3,769.2 955.5,777.0 957.7,777.0 959.9,769.2 962.2,737.9 964.4,753.5 966.6,769.2 968.8,777.0 971.0,777.0 973.2,777.0 975.5,777.0 977.7,777.0 979.9,777.0 982.1,777.0 984.3,777.0 986.6,777.0 988.8,777.0 991.0,777.0 993.2,777.0 995.4,761.4 997.6,745.7 999.9,753.5 1002.1,761.4 1004.3,777.0 1006.5,777.0 1008.7,777.0 1011.0,777.0 1013.2,777.0 1015.4,777.0 1017.6,777.0 1019.8,777.0 1022.0,769.2 1024.3,769.2 1026.5,769.2 1028.7,777.0 1030.9,777.0 1033.1,769.2 1035.4,769.2 1037.6,777.0 1039.8,777.0 1042.0,777.0 1044.2,777.0 1046.5,777.0 1048.7,777.0 1050.9,777.0 1053.1,777.0 1055.3,777.0 1057.5,777.0 1059.8,777.0 1062.0,769.2 1064.2,777.0 1066.4,777.0 1068.6,777.0 1070.9,777.0 1073.1,777.0 1075.3,777.0 1077.5,777.0 1079.7,769.2 1081.9,761.4 1084.2,753.5 1086.4,769.2 1088.6,777.0" fill="none" stroke="#f060b0" stroke-width="1" stroke-linejoin="miter" shape-rendering="crispEdges"/>
<polyline points="822.4,769.2 824.6,777.0 826.8,769.2 829.1,761.4 831.3,753.5 833.5,769.2 835.7,777.0 837.9,769.2 840.1,769.2 842.4,769.2 844.6,761.4 846.8,753.5 849.0,730.1 851.2,745.7 853.5,769.2 855.7,753.5 857.9,753.5 860.1,737.9 862.3,737.9 864.5,753.5 866.8,769.2 869.0,753.5 871.2,753.5 873.4,769.2 875.6,777.0 877.9,769.2 880.1,769.2 882.3,769.2 884.5,761.4 886.7,769.2 888.9,769.2 891.2,769.2 893.4,769.2 895.6,777.0 897.8,761.4 900.0,753.5 902.3,769.2 904.5,761.4 906.7,769.2 908.9,761.4 911.1,753.5 913.4,769.2 915.6,777.0 917.8,777.0 920.0,769.2 922.2,761.4 924.4,769.2 926.7,777.0 928.9,777.0 931.1,777.0 933.3,753.5 935.5,745.7 937.8,761.4 940.0,761.4 942.2,761.4 944.4,769.2 946.6,753.5 948.8,745.7 951.1,745.7 953.3,753.5 955.5,745.7 957.7,761.4 959.9,769.2 962.2,737.9 964.4,714.4 966.6,737.9 968.8,761.4 971.0,769.2 973.2,761.4 975.5,737.9 977.7,745.7 979.9,761.4 982.1,769.2 984.3,769.2 986.6,761.4 988.8,753.5 991.0,761.4 993.2,745.7 995.4,745.7 997.6,730.1 999.9,698.8 1002.1,730.1 1004.3,761.4 1006.5,730.1 1008.7,730.1 1011.0,745.7 1013.2,761.4 1015.4,769.2 1017.6,761.4 1019.8,769.2 1022.0,745.7 1024.3,737.9 1026.5,745.7 1028.7,745.7 1030.9,769.2 1033.1,745.7 1035.4,745.7 1037.6,761.4 1039.8,753.5 1042.0,737.9 1044.2,753.5 1046.5,753.5 1048.7,745.7 1050.9,753.5 1053.1,730.1 1055.3,745.7 1057.5,761.4 1059.8,753.5 1062.0,745.7 1064.2,761.4 1066.4,777.0 1068.6,761.4 1070.9,761.4 1073.1,777.0 1075.3,769.2 1077.5,769.2 1079.7,769.2 1081.9,745.7 1084.2,722.3 1086.4,737.9 1088.6,761.4" fill="none" stroke="#ffffff" stroke-width="1" stroke-linejoin="miter" shape-rendering="crispEdges"/>
<path d="M822.4 777.5H1089.1M1088.6 778.0V542" stroke="#c8c8c8" stroke-width="1.2" fill="none" shape-rendering="crispEdges"/>
<path d="M1084.1 698.8h5M1084.1 620.6h5M1084.1 542.4h5M1086.1 737.9h3M1086.1 659.7h3M1086.1 581.5h3M1088.6 777.0v2.5M1044.2 777.0v2.5M999.9 777.0v2.5M955.5 777.0v2.5M911.1 777.0v2.5M866.7 777.0v2.5M822.4 777.0v2.5" stroke="#c8c8c8" stroke-width="1" fill="none" shape-rendering="crispEdges"/>
<g font-family="DejaVu Sans, Liberation Sans, sans-serif" font-size="10.7" fill="#c0c0c8"><text x="1092.6" y="703.1">10</text><text x="1092.6" y="624.9">20</text><text x="1092.6" y="546.7">30</text><text x="819.7" y="792.3">60</text><text x="863.8" y="792.3">50</text><text x="908.5" y="792.3">40</text><text x="952.5" y="792.3">30</text><text x="997.1" y="792.3">20</text><text x="1042.5" y="792.3">10</text><text x="1087.3" y="792.3">0</text><text x="1100" y="792.3">min</text></g>
</svg>
<span class="t fb" id="t0" style="left:824.75px;top:18.86px;font-size:12px;color:#d8d8d8;letter-spacing:-0.166px;">STRIKE</span>
<span class="t fb" id="t1" style="left:889.50px;top:18.86px;font-size:12px;color:#bdbdbd;letter-spacing:0.662px;">NOISE</span>
<span class="t fb" id="t2" style="left:997.50px;top:18.86px;font-size:12px;color:#ffffff;letter-spacing:0.139px;">Bng 9°</span>
<span class="t fb" id="t3" style="left:1076.00px;top:18.86px;font-size:12px;color:#00ff00;letter-spacing:0.049px;">256mi</span>
<span class="t fr" id="t4" style="left:829.50px;top:65.79px;font-size:11px;color:#e4e4e4;letter-spacing:0.317px;">Strikes/min</span>
<span class="t fr" id="t5" style="left:943.50px;top:65.79px;font-size:11px;color:#e4e4e4;letter-spacing:0.382px;">Close/min</span>
<span class="t fr" id="t6" style="left:1049.25px;top:65.79px;font-size:11px;color:#e4e4e4;letter-spacing:0.309px;">Noises/min</span>
<span class="t fb" id="t7" style="left:883.00px;top:86.23px;font-size:27.5px;color:#ffffff;transform:scaleX(1.167);transform-origin:2.0px 0;">2</span>
<span class="t fb" id="t8" style="left:993.25px;top:86.23px;font-size:27.5px;color:#ffffff;transform:scaleX(1.074);transform-origin:1.0px 0;">0</span>
<span class="t fb" id="t9" style="left:1103.00px;top:86.23px;font-size:27.5px;color:#c0c0c0;transform:scaleX(1.074);transform-origin:1.0px 0;">0</span>
<span class="t fr" id="t10" style="left:827.75px;top:131.40px;font-size:12.5px;color:#ffffff;letter-spacing:-0.029px;">Total Strikes</span>
<span class="t fr" id="t11" style="left:945.25px;top:131.40px;font-size:12.5px;color:#ffffff;letter-spacing:-0.028px;">Total Close</span>
<span class="t fr" id="t12" style="left:1048.25px;top:131.40px;font-size:12.5px;color:#c8c8c8;letter-spacing:0.060px;">Total Noises</span>
<span class="t fr" id="t13" style="left:871.75px;top:149.40px;font-size:12.5px;color:#ffffff;letter-spacing:-0.370px;">8314</span>
<span class="t fr" id="t14" style="left:1005.50px;top:149.40px;font-size:12.5px;color:#ffffff;">0</span>
<span class="t fr" id="t15" style="left:1100.25px;top:149.40px;font-size:12.5px;color:#c8c8c8;letter-spacing:-0.203px;">453</span>
<span class="t fr" id="t16" style="left:820.00px;top:203.40px;font-size:12.5px;color:#b8b8b8;letter-spacing:0.033px;">Lightning type distribution</span>
<span class="t fcb" id="t17" style="left:821.00px;top:225.15px;font-size:12.5px;color:#ffffff;letter-spacing:-0.127px;">Cloud-ground</span>
<span class="t fcb" id="t18" style="left:912.00px;top:225.15px;font-size:12.5px;color:#d0d0d0;">+</span>
<span class="t fcb" id="t19" style="left:979.50px;top:225.15px;font-size:12.5px;color:#ffffff;letter-spacing:0.925px;">33%</span>
<span class="t fcb" id="t20" style="left:1015.00px;top:225.15px;font-size:12.5px;color:#d0d0d0;">−</span>
<span class="t fcb" id="t21" style="left:1081.75px;top:225.15px;font-size:12.5px;color:#ffffff;letter-spacing:1.500px;">18%</span>
<span class="t fcb" id="t22" style="left:821.00px;top:248.70px;font-size:12.5px;color:#c8c8c8;letter-spacing:0.064px;">Count</span>
<span class="t fcb" id="t23" style="left:925.50px;top:248.70px;font-size:12.5px;color:#ffffff;letter-spacing:-0.075px;">2768</span>
<span class="t fcb" id="t24" style="left:1027.50px;top:248.70px;font-size:12.5px;color:#ffffff;letter-spacing:0.259px;">1470</span>
<span class="t fcb" id="t25" style="left:820.00px;top:279.15px;font-size:12.5px;color:#ffffff;letter-spacing:-0.078px;">Intracloud</span>
<span class="t fcb" id="t26" style="left:912.00px;top:279.15px;font-size:12.5px;color:#d0d0d0;">+</span>
<span class="t fcb" id="t27" style="left:978.50px;top:279.15px;font-size:12.5px;color:#ffffff;letter-spacing:1.425px;">16%</span>
<span class="t fcb" id="t28" style="left:1015.00px;top:279.15px;font-size:12.5px;color:#d0d0d0;">−</span>
<span class="t fcb" id="t29" style="left:1082.75px;top:279.15px;font-size:12.5px;color:#ffffff;letter-spacing:1.050px;">33%</span>
<span class="t fcb" id="t30" style="left:821.00px;top:303.00px;font-size:12.5px;color:#c8c8c8;letter-spacing:0.064px;">Count</span>
<span class="t fcb" id="t31" style="left:924.50px;top:303.00px;font-size:12.5px;color:#ffffff;letter-spacing:0.259px;">1328</span>
<span class="t fcb" id="t32" style="left:1028.50px;top:303.00px;font-size:12.5px;color:#ffffff;letter-spacing:-0.075px;">2748</span>
<span class="t fb" id="t33" style="left:821.25px;top:338.06px;font-size:16.1px;color:#00f000;letter-spacing:0.240px;">10/25/2025 3:49:16 PM</span>
<span class="t fr" id="t34" style="left:821.00px;top:376.40px;font-size:12.5px;color:#ffffff;letter-spacing:-0.096px;">Squelch</span>
<span class="t fr" id="t35" style="left:820.00px;top:396.40px;font-size:12.5px;color:#ffffff;letter-spacing:0.169px;">Persistence</span>
<span class="t fr" id="t36" style="left:820.00px;top:416.40px;font-size:12.5px;color:#ffffff;letter-spacing:0.143px;">Range</span>
<span class="t fr" id="t37" style="left:909.25px;top:376.40px;font-size:12.5px;color:#ffffff;">0</span>
<span class="t fr" id="t38" style="left:909.25px;top:396.40px;font-size:12.5px;color:#ffffff;letter-spacing:-0.256px;">90 min</span>
<span class="t fr" id="t39" style="left:909.25px;top:416.40px;font-size:12.5px;color:#ffffff;letter-spacing:-0.352px;">313 mi</span>
<span class="t fr" id="t40" style="left:980.00px;top:376.40px;font-size:12.5px;color:#ffffff;letter-spacing:0.327px;">Upload</span>
<span class="t fr" id="t41" style="left:981.00px;top:396.40px;font-size:12.5px;color:#ffffff;letter-spacing:0.040px;">Capture</span>
<span class="t fr" id="t42" style="left:980.00px;top:416.40px;font-size:12.5px;color:#ffffff;letter-spacing:-0.170px;">Receiver</span>
<span class="t fr" id="t43" style="left:1060.50px;top:376.40px;font-size:12.5px;color:#b8b8b8;letter-spacing:0.126px;">Disabled</span>
<span class="t fr" id="t44" style="left:1061.50px;top:396.40px;font-size:12.5px;color:#00e000;letter-spacing:-0.495px;">Active</span>
<span class="t fr" id="t45" style="left:1060.50px;top:416.40px;font-size:12.5px;color:#00e000;letter-spacing:0.320px;">Enabled</span>
<span class="t fr" id="t46" style="left:820.00px;top:463.40px;font-size:12.5px;color:#b8b8b8;letter-spacing:-0.127px;">Uptime</span>
<span class="t fr" id="t47" style="left:909.25px;top:463.40px;font-size:12.5px;color:#ffffff;letter-spacing:0.045px;">203:19</span>
<span class="t fr" id="t48" style="left:980.00px;top:463.40px;font-size:12.5px;color:#b8b8b8;letter-spacing:0.037px;">Peak time</span>
<span class="t fr" id="t49" style="left:1060.00px;top:463.40px;font-size:12.5px;color:#b8b8b8;letter-spacing:0.197px;">Plot</span>
<span class="t fr" id="t50" style="left:820.00px;top:486.40px;font-size:12.5px;color:#b8b8b8;letter-spacing:0.299px;">Peak rate</span>
<span class="t fr" id="t51" style="left:909.25px;top:486.40px;font-size:12.5px;color:#ffffff;letter-spacing:-0.053px;">43/min</span>
<span class="t fr" id="t52" style="left:981.00px;top:486.40px;font-size:12.5px;color:#ffffff;letter-spacing:-0.057px;">4:22 AM</span>
<span class="t fr" id="t53" style="left:1061.00px;top:486.40px;font-size:12.5px;color:#ffffff;letter-spacing:-0.148px;">Strike</span>
<span class="t fr" id="t54" style="left:823.50px;top:516.40px;font-size:12.5px;color:#b8b8b8;letter-spacing:0.065px;">Trend graph</span>
<span class="t fr" id="t55" style="left:908.50px;top:516.40px;font-size:12.5px;color:#ffffff;letter-spacing:-0.256px;">60 min</span>
<span class="t fc" id="t56" style="left:13.70px;top:762.45px;font-size:9.0px;color:#e4e4e4;letter-spacing:0.106px;">Symbols</span>
<span class="t fc" id="t57" style="left:53.30px;top:762.45px;font-size:9.0px;color:#e4e4e4;letter-spacing:0.911px;">-CG</span>
<span class="t fc" id="t58" style="left:78.20px;top:762.45px;font-size:9.0px;color:#e4e4e4;letter-spacing:1.296px;">-IC</span>
<span class="t fc" id="t59" style="left:99.20px;top:762.45px;font-size:9.0px;color:#e4e4e4;letter-spacing:0.680px;">+CG</span>
<span class="t fc" id="t60" style="left:124.00px;top:762.45px;font-size:9.0px;color:#e4e4e4;letter-spacing:0.764px;">+IC</span>
<span class="t fc" id="t61" style="left:153.40px;top:762.45px;font-size:9.0px;color:#e4e4e4;letter-spacing:-0.005px;">Strike age color codes</span>
<span class="t fc" id="t62" style="left:13.70px;top:775.45px;font-size:9.0px;color:#e4e4e4;letter-spacing:-0.174px;">Recent</span>
<span class="t fc" id="t63" style="left:13.70px;top:788.35px;font-size:9.0px;color:#e4e4e4;letter-spacing:0.139px;">Old</span>
<span class="t fc" id="t64" style="left:153.80px;top:775.45px;font-size:9.0px;color:#ffe800;letter-spacing:-0.500px;">15+</span>
<span class="t fc" id="t65" style="left:188.40px;top:775.45px;font-size:9.0px;color:#e8a800;letter-spacing:-0.300px;">30+</span>
<span class="t fc" id="t66" style="left:223.30px;top:775.45px;font-size:9.0px;color:#f09000;letter-spacing:-0.300px;">45+</span>
<span class="t fc" id="t67" style="left:153.80px;top:788.35px;font-size:9.0px;color:#e88000;letter-spacing:-0.500px;">60+</span>
<span class="t fc" id="t68" style="left:188.40px;top:788.35px;font-size:9.0px;color:#e86000;letter-spacing:-0.300px;">75+</span>
<span class="t fc" id="t69" style="left:223.30px;top:788.35px;font-size:9.0px;color:#f03808;letter-spacing:-0.300px;">90+</span>

</body></html>
